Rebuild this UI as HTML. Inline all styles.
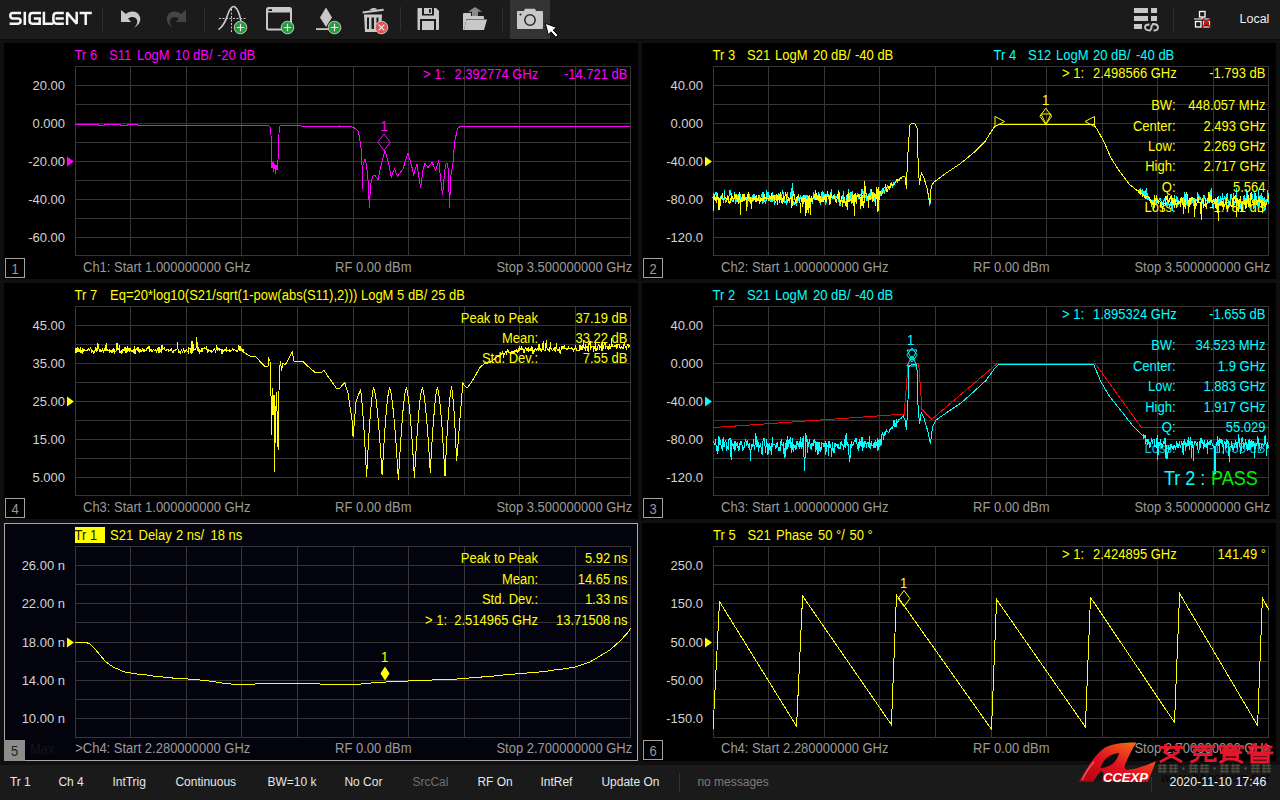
<!DOCTYPE html><html><head><meta charset="utf-8"><style>html,body{margin:0;padding:0;background:#0f0f0f;width:1280px;height:800px;overflow:hidden;position:relative}</style></head><body><svg width="1280" height="800" viewBox="0 0 1280 800" style="position:absolute;left:0;top:0;font-family:'Liberation Sans', sans-serif">
<rect x="0" y="0" width="1280" height="800" fill="#0f0f0f"/>
<rect x="0" y="0" width="1280" height="39" fill="#1b1b1b"/>
<rect x="0" y="39" width="1280" height="1" fill="#0b0b0b"/>
<path d="M21.1,13.05 H12.8 Q10.3,13.05 10.3,15.6 Q10.3,18.5 12.8,18.5 H17.9 Q20.6,18.5 20.6,21.1 Q20.6,23.65 17.9,23.65 H9.6 M24.8,11.8 V24.9 M41,13.05 H32.3 Q29.6,13.05 29.6,16.2 V20.5 Q29.6,23.65 32.3,23.65 H39.7 V18.5 H33.8 M43.9,11.8 V23.65 H53.2 M63.8,13.05 H56.6 Q53.4,13.05 53.4,16.5 V20.3 Q53.4,23.65 56.6,23.65 H63.8 M55.6,18.4 H63.8 M67.1,24.9 V12.6 L76.7,23.8 V11.8 M79.6,13.05 H91.8 M85.7,13.05 V24.9" fill="none" stroke="#f6f6f2" stroke-width="2.5" stroke-linejoin="miter" stroke-miterlimit="1.5"/>
<rect x="102.0" y="7" width="1" height="24" fill="#303030"/>
<rect x="204.0" y="7" width="1" height="24" fill="#303030"/>
<rect x="400.0" y="7" width="1" height="24" fill="#303030"/>
<rect x="502.0" y="7" width="1" height="24" fill="#303030"/>
<rect x="1173.0" y="7" width="1" height="24" fill="#303030"/>
<path d="M121,10 L121,22 L131,22 L128,18.5 C131,16 136,16.5 137,20 C138,23 136,26 134,28 C139,25 141,21 140,17 C138,11 131,10 126,14 Z" fill="#c8c8c8"/>
<path d="M186,10 L186,22 L176,22 L179,18.5 C176,16 171,16.5 170,20 C169,23 171,26 173,28 C168,25 166,21 167,17 C169,11 176,10 181,14 Z" fill="#454545"/>
<path d="M218.5,29.5 C224,26 226,20 228,14 C230,8 233,5.5 235,7 C238,9 240,16 241,21" fill="none" stroke="#c8c8c8" stroke-width="1.6"/>
<path d="M219,18.5 H246" stroke="#c8c8c8" stroke-width="1" stroke-dasharray="2,1.5"/>
<path d="M231.5,9 V32" stroke="#c8c8c8" stroke-width="1" stroke-dasharray="2,1.5"/>
<circle cx="240.5" cy="27.5" r="6.3" fill="#2b9a3c" stroke="#d0d0d0" stroke-width="0.9"/>
<path d="M236.7,27.5 H244.3 M240.5,23.7 V31.3" stroke="#e8e8e8" stroke-width="1.2"/>
<rect x="267" y="8" width="24" height="21.5" rx="1.5" fill="none" stroke="#c8c8c8" stroke-width="2"/>
<rect x="267" y="8" width="24" height="4.5" fill="#c8c8c8"/>
<rect x="268.5" y="9.2" width="3.5" height="1.8" fill="#1b1b1b"/>
<circle cx="287.5" cy="27.5" r="6.3" fill="#2b9a3c" stroke="#d0d0d0" stroke-width="0.9"/>
<path d="M283.7,27.5 H291.3 M287.5,23.7 V31.3" stroke="#e8e8e8" stroke-width="1.2"/>
<path d="M326,7.5 L332,17.5 L326,27 L320,17.5 Z" fill="#c8c8c8"/>
<rect x="316" y="28.2" width="14" height="1.8" fill="#c8c8c8"/>
<circle cx="334.5" cy="27.5" r="6.3" fill="#2b9a3c" stroke="#d0d0d0" stroke-width="0.9"/>
<path d="M330.7,27.5 H338.3 M334.5,23.7 V31.3" stroke="#e8e8e8" stroke-width="1.2"/>
<path d="M362.5,11.5 L383.5,8.8 L383.8,10.8 L362.8,13.5 Z" fill="#c8c8c8"/>
<path d="M369.5,10.5 C370,7.5 376,7 377.5,9.5 Z" fill="#c8c8c8"/>
<path d="M364,14.5 H382 L381,32 H365 Z" fill="#c8c8c8"/>
<path d="M367,17.5 H369 V29 H367 Z M371.5,17.5 H374 V29 H371.5 Z M376.5,17.5 H378.5 V29 H376.5 Z" fill="#1b1b1b"/>
<circle cx="381.5" cy="27.5" r="6.3" fill="#e05555" stroke="#d0d0d0" stroke-width="0.9"/>
<path d="M378.7,24.7 L384.3,30.3 M384.3,24.7 L378.7,30.3" stroke="#f0f0f0" stroke-width="1.1"/>
<path d="M418.5,8 H436 L439,11 V29 C439,29.6 438.6,30 438,30 H418.5 C417.9,30 417.5,29.6 417.5,29 V9 C417.5,8.4 417.9,8 418.5,8 Z" fill="#c8c8c8"/>
<path d="M422,8 H434 V15.5 H422 Z" fill="#1b1b1b"/>
<path d="M424,8 H432 V14 H424 Z" fill="#c8c8c8"/>
<rect x="429" y="9" width="1.8" height="3.8" fill="#1b1b1b"/>
<path d="M420,19 H436 V30 H420 Z" fill="#1b1b1b"/>
<path d="M422,21 H434 V30 H422 Z" fill="#c8c8c8"/>
<path d="M468,11.8 L475,7 L482,11.8 H478 V16 H472 V11.8 Z" fill="#8a8a8a"/>
<path d="M463,14 C463,13.5 463.5,13 464,13 H471 V16 H483 C483.5,16 484,16.5 484,17 V19 H466.5 L464,30 H463 Z" fill="#c8c8c8"/>
<path d="M466.5,19.5 H487 L484,30 H464 Z" fill="#c8c8c8"/>
<rect x="510" y="0" width="40" height="39" fill="#333333"/>
<path d="M518,11 H524 L525,8.8 H535 L536,11 H542 C542.6,11 543,11.4 543,12 V28 C543,28.6 542.6,29 542,29 H518 C517.4,29 517,28.6 517,28 V12 C517,11.4 517.4,11 518,11 Z" fill="#c8c8c8"/>
<circle cx="530" cy="20" r="5.2" fill="none" stroke="#2a2a2a" stroke-width="1.5"/>
<circle cx="520.5" cy="14.5" r="1.1" fill="#2a2a2a"/>
<path d="M545.3,23.3 L548.3,35 L551,31.8 L555.8,37.2 L558,35.2 L553.2,30.2 L556.5,27.5 Z" fill="#fff" stroke="#000" stroke-width="1"/>
<rect x="1134" y="8" width="14" height="5" fill="#c8c8c8"/>
<rect x="1134" y="16" width="14" height="5" fill="#c8c8c8"/>
<rect x="1134" y="24" width="8" height="5" fill="#c8c8c8"/>
<rect x="1151" y="8" width="6" height="5" fill="#c8c8c8"/>
<rect x="1151" y="16" width="6" height="5" fill="#c8c8c8"/>
<path d="M1149.5,24.5 C1146,24.5 1145,26 1145,27 C1145,29 1147,30.5 1150,30.5 L1152,27" fill="none" stroke="#c8c8c8" stroke-width="1.8"/>
<path d="M1153.5,30.5 C1157,30.5 1158,29 1158,27.5 C1158,25.5 1156,24 1153,24 L1151,27" fill="none" stroke="#c8c8c8" stroke-width="1.8"/>
<rect x="1199.5" y="11.5" width="5.5" height="5.5" fill="none" stroke="#ffffff" stroke-width="1.3"/>
<path d="M1202.2,17 V19 M1194,19 H1210" stroke="#ffffff" stroke-width="1.2"/>
<rect x="1195.5" y="21.5" width="5.5" height="5.5" fill="none" stroke="#ffffff" stroke-width="1.3"/>
<rect x="1203.5" y="21.5" width="6" height="5.5" fill="none" stroke="#dddddd" stroke-width="1.3"/>
<path d="M1202.5,18.5 L1210,27 M1210,18.5 L1202.5,27" stroke="#ff0000" stroke-width="1.6"/>
<text transform="translate(1239.5,23) scale(1,1.08)" fill="#eeeeee" font-size="12.5" text-anchor="start" xml:space="preserve" >Local</text>
<rect x="4" y="43" width="634" height="236" fill="#000"/>
<path d="M75.5,66 V256 M130.5,66 V256 M186.5,66 V256 M241.5,66 V256 M297.5,66 V256 M353.5,66 V256 M408.5,66 V256 M464.5,66 V256 M519.5,66 V256 M575.5,66 V256 M630.5,66 V256 M75,66.5 H631 M75,85.5 H631 M75,104.5 H631 M75,123.5 H631 M75,142.5 H631 M75,161.5 H631 M75,180.5 H631 M75,199.5 H631 M75,218.5 H631 M75,237.5 H631 M75,255.5 H631" stroke="#363636" stroke-width="1" fill="none" shape-rendering="crispEdges"/>
<rect x="5.5" y="258.5" width="19" height="19" fill="none" stroke="#a0a0a0" stroke-width="1"/>
<text transform="translate(15,274) scale(1,1.08)" fill="#9a9a9a" font-size="13" text-anchor="middle" xml:space="preserve" >1</text>
<text transform="translate(74.5,60) scale(1,1.08)" fill="#ff00ff" font-size="13" text-anchor="start" xml:space="preserve" >Tr 6</text>
<text transform="translate(109.0,60) scale(1,1.08)" fill="#ff00ff" font-size="13" text-anchor="start" xml:space="preserve" >S11</text>
<text transform="translate(137.0,60) scale(1,1.08)" fill="#ff00ff" font-size="13" text-anchor="start" xml:space="preserve" >LogM</text>
<text transform="translate(175.0,60) scale(1,1.08)" fill="#ff00ff" font-size="13" text-anchor="start" xml:space="preserve" >10 dB/</text>
<text transform="translate(217.0,60) scale(1,1.08)" fill="#ff00ff" font-size="13" text-anchor="start" xml:space="preserve" >-20 dB</text>
<text transform="translate(65,89.6) scale(1,1.0)" fill="#d4d4d4" font-size="13" text-anchor="end" xml:space="preserve" >20.00</text>
<text transform="translate(65,127.6) scale(1,1.0)" fill="#d4d4d4" font-size="13" text-anchor="end" xml:space="preserve" >0.000</text>
<text transform="translate(65,165.6) scale(1,1.0)" fill="#d4d4d4" font-size="13" text-anchor="end" xml:space="preserve" >-20.00</text>
<text transform="translate(65,203.6) scale(1,1.0)" fill="#d4d4d4" font-size="13" text-anchor="end" xml:space="preserve" >-40.00</text>
<text transform="translate(65,241.6) scale(1,1.0)" fill="#d4d4d4" font-size="13" text-anchor="end" xml:space="preserve" >-60.00</text>
<path d="M67,156.5 L74,161.5 L67,166.5 Z" fill="#ff00ff"/>
<text transform="translate(83,271.8) scale(1,1.08)" fill="#9a9a9a" font-size="13" text-anchor="start" xml:space="preserve" >Ch1: Start 1.000000000 GHz</text>
<text transform="translate(335,271.8) scale(1,1.08)" fill="#9a9a9a" font-size="13" text-anchor="start" xml:space="preserve" >RF 0.00 dBm</text>
<text transform="translate(632.2,271.8) scale(1,1.08)" fill="#9a9a9a" font-size="13" text-anchor="end" xml:space="preserve" >Stop 3.500000000 GHz</text>
<text transform="translate(423,78.5) scale(1,1.08)" fill="#ff00ff" font-size="13" text-anchor="start" xml:space="preserve" >&gt; 1:</text>
<text transform="translate(454.5,78.5) scale(1,1.08)" fill="#ff00ff" font-size="13" text-anchor="start" xml:space="preserve" >2.392774 GHz</text>
<text transform="translate(627.5,78.5) scale(1,1.08)" fill="#ff00ff" font-size="13" text-anchor="end" xml:space="preserve" >-14.721 dB</text>
<polyline points="75.0,124.5 98.0,124.5 99.0,125.5 104.0,125.5 105.0,124.5 120.0,124.5 121.0,125.5 127.0,125.5 128.0,124.5 137.0,124.5 138.0,125.3 259.0,125.3 261.0,126.0 263.0,125.5 268.0,125.5 270.0,126.5 271.0,135.0 271.5,163.0 272.0,168.0 273.0,162.0 273.5,172.0 274.5,164.0 275.5,174.0 276.0,165.0 277.0,170.0 278.0,160.0 278.5,141.0 279.5,126.5 281.0,125.5 300.0,125.5 302.0,126.3 330.0,126.3 340.0,126.0 350.0,126.5 354.0,127.5 358.0,131.0 359.5,137.0 361.0,148.0 362.0,165.0 362.5,188.5 363.0,165.0 365.0,159.5 366.5,165.0 368.0,180.0 369.4,207.5 370.5,185.0 372.5,176.5 375.0,175.0 378.0,180.0 380.6,167.5 385.0,150.5 388.7,163.7 391.2,177.0 394.4,168.7 397.5,176.3 403.0,168.7 408.0,153.0 412.0,167.5 413.7,174.4 417.0,164.4 420.6,188.0 423.0,170.0 425.0,163.0 428.0,168.0 432.0,162.5 435.6,170.0 438.7,160.6 442.5,195.0 445.5,164.4 447.0,163.0 448.5,170.0 449.4,207.5 451.0,175.0 453.0,163.0 453.7,152.5 455.0,140.0 457.5,128.7 460.0,126.5 463.0,126.0 560.0,126.0 561.0,127.0 562.0,126.0 630.0,126.0" fill="none" stroke="#ff00ff" stroke-width="1.0" stroke-linejoin="miter" shape-rendering="crispEdges" />
<path d="M384,133.89999999999998 L390.142,142.2 L384,150.5 L377.858,142.2 Z" fill="none" stroke="#ff00ff" stroke-width="1"/>
<text transform="translate(384,131) scale(1,1.08)" fill="#ff00ff" font-size="13" text-anchor="middle" xml:space="preserve" >1</text>
<rect x="642" y="43" width="634" height="236" fill="#000"/>
<path d="M713.5,66 V256 M768.5,66 V256 M824.5,66 V256 M879.5,66 V256 M935.5,66 V256 M991.5,66 V256 M1046.5,66 V256 M1102.5,66 V256 M1157.5,66 V256 M1213.5,66 V256 M1268.5,66 V256 M713,66.5 H1269 M713,85.5 H1269 M713,104.5 H1269 M713,123.5 H1269 M713,142.5 H1269 M713,161.5 H1269 M713,180.5 H1269 M713,199.5 H1269 M713,218.5 H1269 M713,237.5 H1269 M713,255.5 H1269" stroke="#363636" stroke-width="1" fill="none" shape-rendering="crispEdges"/>
<rect x="643.5" y="258.5" width="19" height="19" fill="none" stroke="#a0a0a0" stroke-width="1"/>
<text transform="translate(653,274) scale(1,1.08)" fill="#9a9a9a" font-size="13" text-anchor="middle" xml:space="preserve" >2</text>
<text transform="translate(712.5,60) scale(1,1.08)" fill="#ffff00" font-size="13" text-anchor="start" xml:space="preserve" >Tr 3</text>
<text transform="translate(747.0,60) scale(1,1.08)" fill="#ffff00" font-size="13" text-anchor="start" xml:space="preserve" >S21</text>
<text transform="translate(775.0,60) scale(1,1.08)" fill="#ffff00" font-size="13" text-anchor="start" xml:space="preserve" >LogM</text>
<text transform="translate(813.0,60) scale(1,1.08)" fill="#ffff00" font-size="13" text-anchor="start" xml:space="preserve" >20 dB/</text>
<text transform="translate(855.0,60) scale(1,1.08)" fill="#ffff00" font-size="13" text-anchor="start" xml:space="preserve" >-40 dB</text>
<text transform="translate(993.5,60) scale(1,1.08)" fill="#00ffff" font-size="13" text-anchor="start" xml:space="preserve" >Tr 4</text>
<text transform="translate(1028.0,60) scale(1,1.08)" fill="#00ffff" font-size="13" text-anchor="start" xml:space="preserve" >S12</text>
<text transform="translate(1056.0,60) scale(1,1.08)" fill="#00ffff" font-size="13" text-anchor="start" xml:space="preserve" >LogM</text>
<text transform="translate(1093.0,60) scale(1,1.08)" fill="#00ffff" font-size="13" text-anchor="start" xml:space="preserve" >20 dB/</text>
<text transform="translate(1136.0,60) scale(1,1.08)" fill="#00ffff" font-size="13" text-anchor="start" xml:space="preserve" >-40 dB</text>
<text transform="translate(703,89.6) scale(1,1.0)" fill="#d4d4d4" font-size="13" text-anchor="end" xml:space="preserve" >40.00</text>
<text transform="translate(703,127.6) scale(1,1.0)" fill="#d4d4d4" font-size="13" text-anchor="end" xml:space="preserve" >0.000</text>
<text transform="translate(703,165.6) scale(1,1.0)" fill="#d4d4d4" font-size="13" text-anchor="end" xml:space="preserve" >-40.00</text>
<text transform="translate(703,203.6) scale(1,1.0)" fill="#d4d4d4" font-size="13" text-anchor="end" xml:space="preserve" >-80.00</text>
<text transform="translate(703,241.6) scale(1,1.0)" fill="#d4d4d4" font-size="13" text-anchor="end" xml:space="preserve" >-120.0</text>
<path d="M705,156.5 L712,161.5 L705,166.5 Z" fill="#ffff00"/>
<text transform="translate(721,271.8) scale(1,1.08)" fill="#9a9a9a" font-size="13" text-anchor="start" xml:space="preserve" >Ch2: Start 1.000000000 GHz</text>
<text transform="translate(973,271.8) scale(1,1.08)" fill="#9a9a9a" font-size="13" text-anchor="start" xml:space="preserve" >RF 0.00 dBm</text>
<text transform="translate(1270.2,271.8) scale(1,1.08)" fill="#9a9a9a" font-size="13" text-anchor="end" xml:space="preserve" >Stop 3.500000000 GHz</text>
<text transform="translate(1175.5,212) scale(1,1.08)" fill="#ffff00" font-size="13" text-anchor="end" xml:space="preserve" >Loss:</text>
<text transform="translate(1265.5,212) scale(1,1.08)" fill="#ffff00" font-size="13" text-anchor="end" xml:space="preserve" >-1.781 dB</text>
<polyline points="713.0,197.6 713.5,192.9 714.1,197.8 714.6,197.0 715.2,193.4 715.7,192.7 716.3,192.6 716.8,199.5 717.4,198.3 717.9,199.5 718.5,199.8 719.0,200.4 719.6,202.6 720.1,197.9 720.7,197.0 721.2,195.2 721.8,195.8 722.3,199.3 722.9,198.7 723.4,202.9 724.0,198.1 724.5,189.7 725.1,201.3 725.6,203.4 726.2,199.7 726.7,200.6 727.3,196.4 727.8,195.2 728.4,196.7 728.9,197.1 729.5,192.0 730.0,189.9 730.6,192.6 731.1,195.9 731.7,200.3 732.2,200.4 732.8,201.7 733.3,200.3 733.9,201.4 734.4,192.3 735.0,194.0 735.5,204.0 736.1,199.6 736.6,200.7 737.2,196.0 737.7,195.5 738.3,201.7 738.8,193.8 739.4,202.7 739.9,195.0 740.5,194.7 741.0,199.7 741.6,199.0 742.1,196.8 742.7,200.2 743.2,197.0 743.8,197.2 744.3,197.4 744.9,199.8 745.4,197.0 746.0,197.0 746.5,200.7 747.1,206.8 747.6,199.7 748.2,197.7 748.7,198.3 749.3,201.9 749.8,194.5 750.4,201.4 750.9,203.6 751.5,197.3 752.0,200.6 752.6,202.2 753.1,193.6 753.7,199.1 754.2,193.7 754.8,199.0 755.3,202.1 755.9,197.5 756.4,201.6 757.0,197.6 757.5,199.3 758.1,200.7 758.6,200.6 759.2,195.2 759.7,202.8 760.3,201.0 760.8,198.5 761.4,194.6 761.9,195.5 762.5,203.8 763.0,191.8 763.6,203.3 764.1,199.9 764.7,199.9 765.2,202.4 765.8,203.6 766.3,196.0 766.9,190.0 767.4,197.6 768.0,192.2 768.5,201.3 769.1,198.5 769.6,201.3 770.2,198.3 770.7,202.0 771.3,196.2 771.8,201.5 772.4,191.8 772.9,202.1 773.5,197.8 774.0,198.4 774.6,204.6 775.1,198.7 775.7,197.8 776.2,194.2 776.8,194.9 777.3,198.5 777.9,201.2 778.4,193.2 779.0,196.3 779.5,195.4 780.1,195.9 780.6,194.5 781.2,199.7 781.7,196.3 782.3,191.9 782.8,190.9 783.4,195.5 783.9,194.0 784.5,203.0 785.0,200.7 785.6,201.5 786.1,203.0 786.7,205.1 787.2,192.5 787.8,195.3 788.3,200.8 788.9,200.4 789.4,201.6 790.0,199.5 790.5,192.4 791.1,197.3 791.6,201.0 792.2,182.9 792.7,204.2 793.3,204.3 793.8,202.0 794.4,203.0 794.9,204.7 795.5,199.5 796.0,199.1 796.6,205.7 797.1,202.0 797.7,201.5 798.2,195.5 798.8,199.4 799.3,198.3 799.9,200.3 800.4,196.2 801.0,197.4 801.5,201.2 802.1,196.4 802.6,198.5 803.2,199.1 803.7,199.9 804.3,195.8 804.8,195.2 805.4,195.3 805.9,201.0 806.5,195.0 807.0,203.9 807.6,195.4 808.1,203.5 808.7,200.9 809.2,204.1 809.8,201.8 810.3,198.0 810.9,201.0 811.4,200.5 812.0,201.6 812.5,202.7 813.1,197.8 813.6,193.3 814.2,194.5 814.7,199.1 815.3,198.4 815.8,199.2 816.4,198.7 816.9,194.9 817.5,196.4 818.0,197.0 818.6,191.7 819.1,200.4 819.7,198.3 820.2,204.7 820.8,200.3 821.3,197.9 821.9,192.3 822.4,192.0 823.0,198.3 823.5,192.3 824.1,194.9 824.6,198.6 825.2,199.3 825.7,203.6 826.3,202.5 826.8,194.9 827.4,195.6 827.9,193.1 828.5,197.8 829.0,197.4 829.6,200.9 830.1,199.7 830.7,197.9 831.2,189.2 831.8,193.4 832.3,199.2 832.9,197.6 833.4,197.4 834.0,198.4 834.5,194.1 835.1,199.5 835.6,197.2 836.2,196.0 836.7,196.8 837.3,198.9 837.8,196.6 838.4,202.3 838.9,190.4 839.5,200.5 840.0,206.4 840.6,201.1 841.1,201.7 841.7,200.2 842.2,194.8 842.8,199.3 843.3,191.5 843.9,198.6 844.4,200.5 845.0,200.9 845.5,204.1 846.1,202.6 846.6,195.8 847.2,195.8 847.7,200.5 848.3,195.7 848.8,188.8 849.4,201.7 849.9,197.7 850.5,200.3 851.0,191.6 851.6,203.5 852.1,192.3 852.7,191.8 853.2,197.0 853.8,196.1 854.3,197.1 854.9,194.1 855.4,196.1 856.0,195.1 856.5,202.0 857.1,195.0 857.6,194.1 858.2,197.4 858.7,198.1 859.3,193.9 859.8,196.2 860.4,194.3 860.9,194.6 861.5,197.2 862.0,189.4 862.6,192.7 863.1,192.1 863.7,197.7 864.2,198.0 864.8,199.6 865.3,195.2 865.9,194.9 866.4,197.7 867.0,201.4 867.5,199.6 868.1,195.9 868.6,194.7 869.2,194.7 869.7,197.7 870.3,188.6 870.8,196.0 871.4,195.6 871.9,199.3 872.5,192.2 873.0,192.1 873.6,194.8 874.1,201.5 874.7,195.6 875.2,195.6 875.8,194.6 876.3,194.4 876.9,191.6 877.4,194.5 878.0,196.9 878.5,196.1 879.1,190.6 879.6,198.2 880.0,191.9 880.7,195.8 881.4,192.4 882.1,190.2 882.8,188.6 883.5,190.3 884.2,193.6 884.9,191.0 885.6,188.2 886.3,190.5 887.0,188.4 887.7,184.7 888.4,188.4 889.1,187.6 889.8,189.1 890.5,185.3 891.2,182.9 891.9,185.6 892.6,188.0 893.3,182.4 894.0,185.4 894.7,182.5 895.4,182.8 896.1,181.5 896.8,179.9 897.5,181.6 898.2,179.5 898.9,179.6 899.6,179.4 900.3,177.4 901.0,178.4 901.7,177.7 902.4,176.8 903.1,176.1 903.8,176.0 904.0,175.7 905.5,178.0 906.3,188.8 907.6,157.3 908.9,140.2 909.5,125.8 911.5,123.8 914.8,123.8 917.4,128.4 918.1,162.5 919.4,184.9 921.4,173.0 924.0,178.3 927.3,188.8 929.9,206.0 931.2,186.2 933.8,182.2 944.3,174.3 960.1,163.8 974.5,152.0 985.0,141.5 994.2,127.1 999.5,124.4 1093.5,124.4 1097.0,129.0 1104.0,142.0 1111.0,158.0 1120.0,172.0 1130.0,185.0 1138.0,191.0 1138.0,190.5 1138.5,192.3 1139.1,192.1 1139.6,191.7 1140.2,188.4 1140.7,194.1 1141.3,190.3 1141.8,192.4 1142.4,190.9 1142.9,194.2 1143.5,190.9 1144.0,195.0 1144.6,197.2 1145.1,190.3 1145.7,196.7 1146.2,197.5 1146.8,187.9 1147.3,199.9 1147.9,197.5 1148.4,200.1 1149.0,197.7 1149.5,197.9 1150.1,201.4 1150.6,199.5 1151.2,205.1 1151.7,206.0 1152.3,201.1 1152.8,202.1 1153.4,201.2 1153.9,210.0 1154.5,199.1 1155.0,197.6 1155.6,203.4 1156.1,203.6 1156.7,195.5 1157.2,198.8 1157.8,199.3 1158.3,201.8 1158.9,199.9 1159.4,199.3 1160.0,198.2 1160.5,200.4 1161.1,201.1 1161.6,205.3 1162.2,204.1 1162.7,201.9 1163.3,205.5 1163.8,201.4 1164.4,198.8 1164.9,198.8 1165.5,197.0 1166.0,206.1 1166.6,201.6 1167.1,203.7 1167.7,199.7 1168.2,205.0 1168.8,202.3 1169.3,208.5 1169.9,205.0 1170.4,204.2 1171.0,202.5 1171.5,195.5 1172.1,211.2 1172.6,204.9 1173.2,199.9 1173.7,201.1 1174.3,194.6 1174.8,198.4 1175.4,200.0 1175.9,203.1 1176.5,196.9 1177.0,197.3 1177.6,206.7 1178.1,200.5 1178.7,203.9 1179.2,203.2 1179.8,202.2 1180.3,200.4 1180.9,200.2 1181.4,198.8 1182.0,203.2 1182.5,199.6 1183.1,206.2 1183.6,210.2 1184.2,191.6 1184.7,197.5 1185.3,204.8 1185.8,199.1 1186.4,204.7 1186.9,193.4 1187.5,199.7 1188.0,206.1 1188.6,204.4 1189.1,203.4 1189.7,204.0 1190.2,205.0 1190.8,204.4 1191.3,202.2 1191.9,203.4 1192.4,200.2 1193.0,201.6 1193.5,206.0 1194.1,198.4 1194.6,202.1 1195.2,198.8 1195.7,202.7 1196.3,199.3 1196.8,200.8 1197.4,201.6 1197.9,192.2 1198.5,199.9 1199.0,199.8 1199.6,196.3 1200.1,199.8 1200.7,197.9 1201.2,199.5 1201.8,200.7 1202.3,201.8 1202.9,202.1 1203.4,208.1 1204.0,195.4 1204.5,196.9 1205.1,198.9 1205.6,200.4 1206.2,200.3 1206.7,200.2 1207.3,201.4 1207.8,203.5 1208.4,200.9 1208.9,200.7 1209.5,194.4 1210.0,191.7 1210.6,202.0 1211.1,188.0 1211.7,197.6 1212.2,206.8 1212.8,200.4 1213.3,208.6 1213.9,203.8 1214.4,200.2 1215.0,201.1 1215.5,202.5 1216.1,206.9 1216.6,199.2 1217.2,201.9 1217.7,199.6 1218.3,196.5 1218.8,207.6 1219.4,202.9 1219.9,200.3 1220.5,196.0 1221.0,205.8 1221.6,198.2 1222.1,199.8 1222.7,192.6 1223.2,202.8 1223.8,198.8 1224.3,196.6 1224.9,198.2 1225.4,202.0 1226.0,197.2 1226.5,203.4 1227.1,192.9 1227.6,201.4 1228.2,199.8 1228.7,203.7 1229.3,203.0 1229.8,206.7 1230.4,204.2 1230.9,193.7 1231.5,195.5 1232.0,198.8 1232.6,198.4 1233.1,197.5 1233.7,192.9 1234.2,204.7 1234.8,202.5 1235.3,200.8 1235.9,201.6 1236.4,188.0 1237.0,198.6 1237.5,203.2 1238.1,206.6 1238.6,202.4 1239.2,199.3 1239.7,209.3 1240.3,204.0 1240.8,209.0 1241.4,201.8 1241.9,201.3 1242.5,201.3 1243.0,202.6 1243.6,201.5 1244.1,195.5 1244.7,201.0 1245.2,206.4 1245.8,198.5 1246.3,201.1 1246.9,189.4 1247.4,201.3 1248.0,204.4 1248.5,201.4 1249.1,198.0 1249.6,202.1 1250.2,210.0 1250.7,196.0 1251.3,192.2 1251.8,199.0 1252.4,194.2 1252.9,198.5 1253.5,200.1 1254.0,209.1 1254.6,190.7 1255.1,207.1 1255.7,200.4 1256.2,199.5 1256.8,196.3 1257.3,206.3 1257.9,203.6 1258.4,190.0 1259.0,207.3 1259.5,200.7 1260.1,195.2 1260.6,195.7 1261.2,204.0 1261.7,193.3 1262.3,205.3 1262.8,195.8 1263.4,201.4 1263.9,204.7 1264.5,197.2 1265.0,210.6 1265.6,200.8 1266.1,200.8 1266.7,202.0 1267.2,197.9 1267.8,189.8 1268.3,198.2 1268.9,203.5" fill="none" stroke="#00ffff" stroke-width="1.0" stroke-linejoin="miter" shape-rendering="crispEdges" />
<polyline points="713.0,211.3 713.5,198.7 714.1,195.4 714.6,198.6 715.2,201.1 715.7,197.5 716.3,196.9 716.8,202.5 717.4,193.4 717.9,196.4 718.5,201.2 719.0,210.4 719.6,197.9 720.1,205.8 720.7,200.3 721.2,196.8 721.8,198.7 722.3,192.8 722.9,197.6 723.4,200.3 724.0,198.4 724.5,196.4 725.1,196.9 725.6,197.7 726.2,198.7 726.7,200.7 727.3,199.6 727.8,196.9 728.4,196.6 728.9,202.2 729.5,201.9 730.0,203.5 730.6,198.1 731.1,200.0 731.7,193.2 732.2,197.5 732.8,197.3 733.3,201.9 733.9,199.2 734.4,193.7 735.0,198.5 735.5,195.7 736.1,196.4 736.6,194.5 737.2,200.4 737.7,199.2 738.3,203.9 738.8,196.4 739.4,192.2 739.9,195.7 740.5,215.3 741.0,201.4 741.6,198.5 742.1,202.1 742.7,194.2 743.2,201.3 743.8,195.2 744.3,193.6 744.9,199.4 745.4,198.3 746.0,200.1 746.5,210.7 747.1,196.6 747.6,194.4 748.2,193.6 748.7,200.7 749.3,197.8 749.8,198.6 750.4,196.8 750.9,201.1 751.5,208.5 752.0,200.2 752.6,198.3 753.1,200.9 753.7,196.1 754.2,198.1 754.8,198.9 755.3,200.2 755.9,196.0 756.4,195.6 757.0,201.6 757.5,197.8 758.1,200.0 758.6,195.0 759.2,203.0 759.7,203.1 760.3,198.1 760.8,201.8 761.4,198.6 761.9,198.7 762.5,198.6 763.0,201.4 763.6,195.3 764.1,194.7 764.7,199.2 765.2,197.6 765.8,198.9 766.3,196.7 766.9,199.0 767.4,198.5 768.0,198.5 768.5,200.1 769.1,199.0 769.6,195.4 770.2,199.0 770.7,196.5 771.3,199.5 771.8,193.5 772.4,199.7 772.9,196.6 773.5,198.3 774.0,194.9 774.6,198.3 775.1,201.0 775.7,202.1 776.2,199.9 776.8,194.3 777.3,205.2 777.9,195.3 778.4,200.3 779.0,195.7 779.5,202.8 780.1,192.1 780.6,195.2 781.2,202.5 781.7,198.0 782.3,203.8 782.8,199.6 783.4,200.6 783.9,196.0 784.5,198.8 785.0,196.2 785.6,192.5 786.1,196.4 786.7,195.2 787.2,200.8 787.8,203.4 788.3,197.7 788.9,197.3 789.4,201.1 790.0,198.7 790.5,197.6 791.1,197.5 791.6,207.6 792.2,205.6 792.7,200.3 793.3,191.3 793.8,194.8 794.4,194.7 794.9,199.7 795.5,203.4 796.0,202.6 796.6,202.8 797.1,195.9 797.7,199.5 798.2,194.2 798.8,195.9 799.3,199.9 799.9,199.5 800.4,213.2 801.0,202.7 801.5,198.0 802.1,198.7 802.6,207.3 803.2,194.9 803.7,202.4 804.3,201.4 804.8,198.8 805.4,196.2 805.9,215.9 806.5,199.1 807.0,198.9 807.6,199.5 808.1,212.5 808.7,197.5 809.2,194.8 809.8,202.4 810.3,215.0 810.9,198.2 811.4,196.5 812.0,201.5 812.5,199.7 813.1,197.7 813.6,196.8 814.2,195.6 814.7,194.7 815.3,200.3 815.8,190.5 816.4,198.2 816.9,199.7 817.5,199.9 818.0,195.8 818.6,200.8 819.1,194.5 819.7,201.0 820.2,196.4 820.8,203.4 821.3,199.4 821.9,202.1 822.4,199.3 823.0,197.9 823.5,201.5 824.1,195.2 824.6,200.3 825.2,193.7 825.7,202.2 826.3,200.7 826.8,198.5 827.4,190.6 827.9,196.8 828.5,195.1 829.0,198.5 829.6,205.1 830.1,193.0 830.7,204.1 831.2,194.2 831.8,196.6 832.3,197.3 832.9,197.5 833.4,195.4 834.0,198.2 834.5,197.4 835.1,199.6 835.6,201.0 836.2,202.3 836.7,199.4 837.3,198.6 837.8,194.1 838.4,198.9 838.9,191.1 839.5,202.2 840.0,200.4 840.6,202.7 841.1,201.1 841.7,195.8 842.2,202.7 842.8,206.7 843.3,197.8 843.9,203.4 844.4,197.1 845.0,203.2 845.5,205.9 846.1,200.9 846.6,198.9 847.2,210.0 847.7,196.8 848.3,192.3 848.8,202.4 849.4,196.4 849.9,201.5 850.5,200.0 851.0,198.8 851.6,199.7 852.1,202.8 852.7,193.8 853.2,196.2 853.8,198.5 854.3,216.1 854.9,194.1 855.4,193.5 856.0,202.1 856.5,202.8 857.1,194.8 857.6,195.9 858.2,194.7 858.7,197.4 859.3,195.2 859.8,197.9 860.4,197.5 860.9,208.9 861.5,192.8 862.0,195.2 862.6,198.3 863.1,207.7 863.7,201.3 864.2,202.5 864.8,180.7 865.3,192.8 865.9,193.1 866.4,194.8 867.0,195.9 867.5,199.3 868.1,195.6 868.6,207.6 869.2,197.1 869.7,195.9 870.3,199.0 870.8,198.1 871.4,189.6 871.9,190.9 872.5,199.8 873.0,201.5 873.6,194.7 874.1,193.7 874.7,196.0 875.2,195.4 875.8,205.5 876.3,191.3 876.9,187.4 877.4,192.6 878.0,212.4 878.5,187.2 879.1,191.8 879.6,199.9 880.0,193.3 880.7,191.9 881.4,195.5 882.1,193.9 882.8,191.1 883.5,190.9 884.2,187.4 884.9,187.6 885.6,185.4 886.3,188.0 887.0,191.5 887.7,190.0 888.4,186.8 889.1,185.9 889.8,187.5 890.5,186.9 891.2,183.5 891.9,184.4 892.6,185.1 893.3,184.5 894.0,184.2 894.7,183.8 895.4,182.4 896.1,180.9 896.8,179.2 897.5,179.6 898.2,180.8 898.9,180.9 899.6,179.7 900.3,178.1 901.0,176.7 901.7,177.9 902.4,176.3 903.1,176.3 903.8,176.5 904.0,175.7 905.5,178.0 906.3,188.8 907.6,157.3 908.9,140.2 909.5,125.8 911.5,123.8 914.8,123.8 917.4,128.4 918.1,162.5 919.4,184.9 921.4,173.0 924.0,178.3 927.3,188.8 929.9,203.2 931.2,186.2 933.8,182.2 944.3,174.3 960.1,163.8 974.5,152.0 985.0,141.5 994.2,127.1 999.5,124.4 1093.5,124.4 1097.0,129.0 1104.0,142.0 1111.0,158.0 1120.0,172.0 1130.0,185.0 1138.0,191.0 1138.0,190.5 1138.5,191.4 1139.1,192.7 1139.6,193.0 1140.2,190.0 1140.7,194.4 1141.3,193.9 1141.8,193.7 1142.4,195.7 1142.9,193.8 1143.5,194.7 1144.0,196.3 1144.6,195.8 1145.1,198.7 1145.7,195.2 1146.2,197.2 1146.8,196.8 1147.3,196.7 1147.9,196.1 1148.4,196.9 1149.0,197.3 1149.5,201.3 1150.1,198.7 1150.6,202.8 1151.2,203.1 1151.7,200.2 1152.3,204.7 1152.8,202.7 1153.4,202.8 1153.9,209.5 1154.5,194.8 1155.0,199.4 1155.6,200.0 1156.1,199.4 1156.7,196.4 1157.2,199.9 1157.8,201.6 1158.3,204.3 1158.9,201.0 1159.4,201.2 1160.0,201.9 1160.5,206.5 1161.1,204.8 1161.6,201.2 1162.2,208.7 1162.7,210.5 1163.3,204.2 1163.8,203.7 1164.4,203.3 1164.9,203.5 1165.5,204.4 1166.0,195.8 1166.6,196.4 1167.1,201.0 1167.7,195.1 1168.2,202.8 1168.8,202.2 1169.3,201.2 1169.9,197.6 1170.4,199.1 1171.0,195.6 1171.5,204.9 1172.1,198.4 1172.6,204.4 1173.2,200.5 1173.7,205.2 1174.3,198.5 1174.8,207.7 1175.4,199.2 1175.9,202.4 1176.5,208.1 1177.0,204.5 1177.6,199.8 1178.1,204.0 1178.7,200.8 1179.2,202.7 1179.8,201.6 1180.3,207.4 1180.9,198.3 1181.4,196.8 1182.0,201.0 1182.5,198.2 1183.1,205.6 1183.6,213.5 1184.2,198.7 1184.7,204.3 1185.3,208.8 1185.8,194.6 1186.4,192.3 1186.9,192.3 1187.5,202.5 1188.0,199.3 1188.6,213.2 1189.1,206.2 1189.7,197.8 1190.2,204.6 1190.8,198.9 1191.3,196.9 1191.9,201.2 1192.4,197.9 1193.0,197.6 1193.5,200.7 1194.1,200.6 1194.6,217.3 1195.2,199.0 1195.7,208.6 1196.3,203.0 1196.8,205.8 1197.4,198.6 1197.9,197.7 1198.5,199.8 1199.0,202.6 1199.6,202.9 1200.1,202.6 1200.7,203.9 1201.2,220.3 1201.8,202.0 1202.3,200.7 1202.9,197.9 1203.4,208.3 1204.0,206.4 1204.5,204.9 1205.1,205.5 1205.6,198.2 1206.2,207.2 1206.7,208.4 1207.3,198.3 1207.8,202.8 1208.4,198.5 1208.9,192.0 1209.5,201.8 1210.0,201.0 1210.6,198.8 1211.1,194.6 1211.7,202.2 1212.2,199.9 1212.8,203.4 1213.3,199.7 1213.9,200.8 1214.4,203.8 1215.0,203.2 1215.5,198.3 1216.1,209.4 1216.6,199.7 1217.2,198.4 1217.7,204.1 1218.3,221.1 1218.8,204.1 1219.4,203.5 1219.9,204.6 1220.5,204.1 1221.0,200.8 1221.6,202.1 1222.1,205.7 1222.7,200.9 1223.2,209.8 1223.8,201.6 1224.3,206.8 1224.9,204.9 1225.4,204.8 1226.0,202.0 1226.5,197.7 1227.1,211.6 1227.6,204.9 1228.2,208.3 1228.7,205.4 1229.3,204.7 1229.8,201.1 1230.4,202.9 1230.9,205.8 1231.5,205.9 1232.0,207.2 1232.6,197.9 1233.1,208.0 1233.7,199.0 1234.2,196.3 1234.8,198.2 1235.3,196.4 1235.9,198.2 1236.4,216.8 1237.0,198.2 1237.5,202.6 1238.1,201.8 1238.6,211.7 1239.2,199.4 1239.7,206.7 1240.3,195.9 1240.8,198.9 1241.4,210.8 1241.9,204.9 1242.5,210.7 1243.0,201.7 1243.6,203.4 1244.1,203.6 1244.7,205.2 1245.2,197.8 1245.8,209.4 1246.3,205.4 1246.9,200.1 1247.4,201.0 1248.0,194.2 1248.5,207.2 1249.1,203.5 1249.6,203.3 1250.2,207.3 1250.7,194.7 1251.3,191.6 1251.8,198.5 1252.4,201.5 1252.9,202.9 1253.5,202.5 1254.0,204.7 1254.6,200.1 1255.1,199.0 1255.7,192.9 1256.2,204.6 1256.8,203.1 1257.3,200.1 1257.9,203.5 1258.4,197.0 1259.0,198.9 1259.5,196.9 1260.1,202.4 1260.6,199.8 1261.2,201.9 1261.7,202.8 1262.3,212.9 1262.8,199.5 1263.4,205.4 1263.9,202.0 1264.5,201.8 1265.0,206.9 1265.6,204.6 1266.1,205.0 1266.7,204.4 1267.2,201.0 1267.8,201.4 1268.3,195.2 1268.9,194.9" fill="none" stroke="#ffff00" stroke-width="1.0" stroke-linejoin="miter" shape-rendering="crispEdges" />
<text transform="translate(1062,77.5) scale(1,1.08)" fill="#ffff00" font-size="13" text-anchor="start" xml:space="preserve" >&gt; 1:</text>
<text transform="translate(1093,77.5) scale(1,1.08)" fill="#ffff00" font-size="13" text-anchor="start" xml:space="preserve" >2.498566 GHz</text>
<text transform="translate(1265.5,77.5) scale(1,1.08)" fill="#ffff00" font-size="13" text-anchor="end" xml:space="preserve" >-1.793 dB</text>
<text transform="translate(1175.5,110) scale(1,1.08)" fill="#ffff00" font-size="13" text-anchor="end" xml:space="preserve" >BW:</text>
<text transform="translate(1265.5,110) scale(1,1.08)" fill="#ffff00" font-size="13" text-anchor="end" xml:space="preserve" >448.057 MHz</text>
<text transform="translate(1175.5,130.5) scale(1,1.08)" fill="#ffff00" font-size="13" text-anchor="end" xml:space="preserve" >Center:</text>
<text transform="translate(1265.5,130.5) scale(1,1.08)" fill="#ffff00" font-size="13" text-anchor="end" xml:space="preserve" >2.493 GHz</text>
<text transform="translate(1175.5,151) scale(1,1.08)" fill="#ffff00" font-size="13" text-anchor="end" xml:space="preserve" >Low:</text>
<text transform="translate(1265.5,151) scale(1,1.08)" fill="#ffff00" font-size="13" text-anchor="end" xml:space="preserve" >2.269 GHz</text>
<text transform="translate(1175.5,171) scale(1,1.08)" fill="#ffff00" font-size="13" text-anchor="end" xml:space="preserve" >High:</text>
<text transform="translate(1265.5,171) scale(1,1.08)" fill="#ffff00" font-size="13" text-anchor="end" xml:space="preserve" >2.717 GHz</text>
<text transform="translate(1175.5,191.5) scale(1,1.08)" fill="#ffff00" font-size="13" text-anchor="end" xml:space="preserve" >Q:</text>
<text transform="translate(1265.5,191.5) scale(1,1.08)" fill="#ffff00" font-size="13" text-anchor="end" xml:space="preserve" >5.564</text>
<path d="M995,116.5 L1004.5,121.5 L995,126.5 Z" fill="none" stroke="#ffff00" stroke-width="1"/>
<path d="M1094.5,116.5 L1085,121.5 L1094.5,126.5 Z" fill="none" stroke="#ffff00" stroke-width="1"/>
<path d="M1045.8,108.3 L1051.72,116.3 L1045.8,124.3 L1039.8799999999999,116.3 Z" fill="none" stroke="#ffff00" stroke-width="1"/>
<path d="M1041,114 L1051,114 L1046,124 Z" fill="none" stroke="#ffff00" stroke-width="1"/>
<text transform="translate(1045.5,104.5) scale(1,1.08)" fill="#ffff00" font-size="13" text-anchor="middle" xml:space="preserve" >1</text>
<rect x="4" y="283" width="634" height="236" fill="#000"/>
<path d="M75.5,306 V496 M130.5,306 V496 M186.5,306 V496 M241.5,306 V496 M297.5,306 V496 M353.5,306 V496 M408.5,306 V496 M464.5,306 V496 M519.5,306 V496 M575.5,306 V496 M630.5,306 V496 M75,306.5 H631 M75,325.5 H631 M75,344.5 H631 M75,363.5 H631 M75,382.5 H631 M75,401.5 H631 M75,420.5 H631 M75,439.5 H631 M75,458.5 H631 M75,477.5 H631 M75,495.5 H631" stroke="#363636" stroke-width="1" fill="none" shape-rendering="crispEdges"/>
<rect x="5.5" y="498.5" width="19" height="19" fill="none" stroke="#a0a0a0" stroke-width="1"/>
<text transform="translate(15,514) scale(1,1.08)" fill="#9a9a9a" font-size="13" text-anchor="middle" xml:space="preserve" >4</text>
<text transform="translate(74.5,300) scale(1,1.08)" fill="#ffff00" font-size="13" text-anchor="start" xml:space="preserve" >Tr 7</text>
<text transform="translate(110,300) scale(1,1.08)" fill="#ffff00" font-size="13" text-anchor="start" xml:space="preserve" textLength="355" lengthAdjust="spacing">Eq=20*log10(S21/sqrt(1-pow(abs(S11),2))) LogM 5 dB/ 25 dB</text>
<text transform="translate(65,329.6) scale(1,1.0)" fill="#d4d4d4" font-size="13" text-anchor="end" xml:space="preserve" >45.00</text>
<text transform="translate(65,367.6) scale(1,1.0)" fill="#d4d4d4" font-size="13" text-anchor="end" xml:space="preserve" >35.00</text>
<text transform="translate(65,405.6) scale(1,1.0)" fill="#d4d4d4" font-size="13" text-anchor="end" xml:space="preserve" >25.00</text>
<text transform="translate(65,443.6) scale(1,1.0)" fill="#d4d4d4" font-size="13" text-anchor="end" xml:space="preserve" >15.00</text>
<text transform="translate(65,481.6) scale(1,1.0)" fill="#d4d4d4" font-size="13" text-anchor="end" xml:space="preserve" >5.000</text>
<path d="M67,396.5 L74,401.5 L67,406.5 Z" fill="#ffff00"/>
<text transform="translate(83,511.8) scale(1,1.08)" fill="#9a9a9a" font-size="13" text-anchor="start" xml:space="preserve" >Ch3: Start 1.000000000 GHz</text>
<text transform="translate(335,511.8) scale(1,1.08)" fill="#9a9a9a" font-size="13" text-anchor="start" xml:space="preserve" >RF 0.00 dBm</text>
<text transform="translate(632.2,511.8) scale(1,1.08)" fill="#9a9a9a" font-size="13" text-anchor="end" xml:space="preserve" >Stop 3.500000000 GHz</text>
<text transform="translate(538,322.7) scale(1,1.08)" fill="#ffff00" font-size="13" text-anchor="end" xml:space="preserve" >Peak to Peak</text>
<text transform="translate(627.5,322.7) scale(1,1.08)" fill="#ffff00" font-size="13" text-anchor="end" xml:space="preserve" >37.19 dB</text>
<text transform="translate(538,343.4) scale(1,1.08)" fill="#ffff00" font-size="13" text-anchor="end" xml:space="preserve" >Mean:</text>
<text transform="translate(627.5,343.4) scale(1,1.08)" fill="#ffff00" font-size="13" text-anchor="end" xml:space="preserve" >33.22 dB</text>
<text transform="translate(538,363.3) scale(1,1.08)" fill="#ffff00" font-size="13" text-anchor="end" xml:space="preserve" >Std. Dev.:</text>
<text transform="translate(627.5,363.3) scale(1,1.08)" fill="#ffff00" font-size="13" text-anchor="end" xml:space="preserve" >7.55 dB</text>
<polyline points="75.0,348.0 75.6,351.2 76.2,349.4 76.8,352.6 77.4,347.5 78.0,351.8 78.6,348.2 79.2,351.1 79.8,349.2 80.4,348.4 81.0,353.4 81.6,349.6 82.2,353.7 82.8,348.3 83.4,351.2 84.0,349.5 84.6,349.6 85.2,350.9 85.8,350.7 86.4,350.5 87.0,350.4 87.6,350.9 88.2,348.9 88.8,348.8 89.4,350.3 90.0,349.0 90.6,347.9 91.2,350.0 91.8,352.2 92.4,350.7 93.0,351.1 93.6,353.9 94.2,349.9 94.8,352.7 95.4,347.7 96.0,348.5 96.6,352.3 97.2,350.0 97.8,342.7 98.4,346.1 99.0,349.0 99.6,352.0 100.2,348.7 100.8,352.3 101.4,350.5 102.0,351.2 102.6,348.5 103.2,350.6 103.8,352.0 104.4,349.0 105.0,350.8 105.6,348.1 106.2,343.3 106.8,350.3 107.4,349.7 108.0,351.1 108.6,350.6 109.2,350.1 109.8,352.0 110.4,350.8 111.0,351.8 111.6,352.2 112.2,349.1 112.8,353.3 113.4,348.9 114.0,349.0 114.6,352.8 115.2,351.6 115.8,351.6 116.4,350.4 117.0,342.8 117.6,349.6 118.2,349.9 118.8,349.4 119.4,345.4 120.0,352.7 120.6,352.3 121.2,349.9 121.8,352.9 122.4,351.9 123.0,349.1 123.6,350.8 124.2,350.4 124.8,347.2 125.4,347.1 126.0,353.2 126.6,349.6 127.2,350.6 127.8,346.1 128.4,351.2 129.0,348.4 129.6,351.8 130.2,347.8 130.8,350.3 131.4,350.8 132.0,351.4 132.6,350.8 133.2,350.2 133.8,352.4 134.4,346.5 135.0,354.1 135.6,349.5 136.2,349.0 136.8,348.8 137.4,351.4 138.0,347.4 138.6,349.6 139.2,353.1 139.8,349.5 140.4,349.4 141.0,351.8 141.6,351.0 142.2,349.0 142.8,350.7 143.4,351.5 144.0,348.8 144.6,351.0 145.2,350.8 145.8,351.0 146.4,350.2 147.0,348.5 147.6,347.7 148.2,346.4 148.8,348.2 149.4,346.6 150.0,351.5 150.6,348.7 151.2,351.6 151.8,349.6 152.4,351.1 153.0,349.9 153.6,349.7 154.2,350.0 154.8,350.1 155.4,350.0 156.0,351.2 156.6,352.1 157.2,348.9 157.8,349.3 158.4,352.9 159.0,346.8 159.6,352.7 160.2,351.1 160.8,349.5 161.4,353.1 162.0,345.1 162.6,349.1 163.2,348.7 163.8,349.0 164.4,348.3 165.0,349.7 165.6,350.4 166.2,349.3 166.8,350.7 167.4,349.1 168.0,349.3 168.6,350.9 169.2,350.6 169.8,350.7 170.4,350.7 171.0,349.0 171.6,348.5 172.2,352.3 172.8,351.2 173.4,351.9 174.0,349.9 174.6,350.2 175.2,350.8 175.8,349.3 176.4,349.5 177.0,349.4 177.6,341.8 178.2,352.6 178.8,351.4 179.4,352.4 180.0,351.3 180.6,352.6 181.2,349.7 181.8,350.4 182.4,352.2 183.0,350.6 183.6,348.2 184.2,350.9 184.8,352.5 185.4,351.4 186.0,349.6 186.6,350.2 187.2,351.9 187.8,351.8 188.4,352.6 189.0,347.6 189.6,348.9 190.2,348.7 190.8,352.6 191.4,353.9 192.0,341.2 192.6,353.3 193.2,344.5 193.8,350.2 194.4,349.9 195.0,349.8 195.6,349.7 196.2,347.2 196.8,336.8 197.4,351.1 198.0,346.9 198.6,351.6 199.2,352.7 199.8,349.7 200.4,350.5 201.0,351.8 201.6,349.8 202.2,352.4 202.8,348.8 203.4,348.8 204.0,348.8 204.6,348.0 205.2,348.3 205.8,348.8 206.4,346.3 207.0,349.4 207.6,351.3 208.2,349.3 208.8,351.5 209.4,350.7 210.0,350.5 210.6,350.4 211.2,352.7 211.8,350.8 212.4,351.3 213.0,350.9 213.6,350.2 214.2,349.3 214.8,348.9 215.4,353.1 216.0,350.5 216.6,346.2 217.2,347.7 217.8,350.4 218.4,348.9 219.0,348.3 219.6,350.1 220.2,349.1 220.8,349.0 221.4,350.2 222.0,354.0 222.6,348.7 223.2,350.2 223.8,352.3 224.4,349.6 225.0,351.0 225.6,349.4 226.2,348.3 226.8,351.1 227.4,350.8 228.0,350.1 228.6,350.8 229.2,349.8 229.8,351.7 230.4,351.4 231.0,349.8 231.6,350.7 232.2,349.9 232.8,348.9 233.4,350.6 234.0,349.6 234.6,349.3 235.2,350.3 235.8,350.3 236.4,350.7 237.0,351.4 237.6,350.9 238.2,350.0 238.8,344.7 239.4,348.1 240.0,351.1 240.6,346.5 241.2,351.0 241.8,348.6 242.4,351.8 243.0,348.9 243.6,351.9 244.0,352.5 250.0,356.0 256.0,357.0 261.3,362.8 265.0,366.6 268.0,366.0 268.4,357.2 270.0,361.0 270.3,375.0 271.0,395.6 271.6,435.0 272.1,388.0 273.0,415.0 274.0,395.0 274.4,471.6 275.5,420.0 276.5,392.0 278.1,450.0 278.5,420.0 279.4,369.4 280.6,361.0 281.5,371.0 283.0,363.0 285.0,365.0 287.5,361.0 292.2,351.6 294.0,361.0 297.8,361.9 303.4,361.9 307.2,365.6 314.7,372.2 322.0,372.0 324.0,370.0 327.0,375.0 336.3,388.1 340.0,388.0 344.7,382.5 348.0,393.0 352.0,420.0 353.1,436.9 356.0,402.0 360.4,389.5 361.1,394.0 361.8,400.3 362.5,407.9 363.1,416.8 363.8,426.9 364.5,437.9 365.2,450.0 365.9,463.1 366.6,477.0 367.3,463.2 368.0,450.3 368.7,438.3 369.4,427.4 370.1,417.4 370.9,408.6 371.6,401.1 372.3,394.9 373.0,390.3 373.7,388.1 374.5,390.3 375.4,394.7 376.2,400.8 377.1,408.2 377.9,416.9 378.7,426.6 379.6,437.4 380.4,449.1 381.3,461.8 382.1,475.3 382.9,461.8 383.6,449.1 384.4,437.4 385.1,426.6 385.9,416.9 386.6,408.2 387.4,400.8 388.1,394.7 388.9,390.3 389.6,388.1 390.5,390.4 391.4,395.1 392.2,401.5 393.1,409.3 394.0,418.4 394.9,428.7 395.8,440.0 396.6,452.4 397.5,465.7 398.4,480.0 399.2,465.7 400.0,452.4 400.8,440.0 401.6,428.7 402.4,418.4 403.1,409.3 403.9,401.5 404.7,395.1 405.5,390.4 406.3,388.1 407.1,390.4 407.9,394.9 408.7,401.2 409.5,408.9 410.4,417.8 411.2,427.8 412.0,438.9 412.8,451.0 413.6,464.1 414.4,478.0 415.2,464.1 416.0,451.0 416.8,438.9 417.6,427.8 418.4,417.8 419.1,408.9 419.9,401.2 420.7,394.9 421.5,390.4 422.3,388.1 423.1,390.2 423.9,394.5 424.7,400.4 425.5,407.6 426.3,415.9 427.1,425.4 427.9,435.8 428.7,447.2 429.5,459.4 430.3,472.5 431.0,459.4 431.7,447.2 432.4,435.8 433.1,425.4 433.9,415.9 434.6,407.6 435.3,400.4 436.0,394.5 436.7,390.2 437.4,388.1 438.2,390.3 438.9,394.8 439.7,400.9 440.4,408.5 441.2,417.2 442.0,427.1 442.7,437.9 443.5,449.8 444.2,462.6 445.0,476.3 445.6,462.6 446.3,449.8 446.9,437.9 447.6,427.1 448.2,417.2 448.9,408.5 449.6,400.9 450.2,394.8 450.9,390.3 451.5,388.1 452.0,389.9 452.5,393.7 453.0,398.8 453.5,405.0 454.1,412.2 454.6,420.4 455.1,429.5 455.6,439.3 456.1,449.9 456.6,461.3 462.8,383.4 466.9,388.1 471.0,383.0 480.0,367.5 484.0,364.0 489.4,362.8 500.6,354.4 500.0,357.2 500.6,353.9 501.2,353.9 501.8,354.6 502.4,351.9 503.0,353.4 503.6,355.8 504.2,353.8 504.8,354.2 505.4,351.6 506.0,351.1 506.6,353.5 507.2,351.3 507.8,350.0 508.4,350.3 509.0,353.2 509.6,352.6 510.2,352.2 510.8,354.1 511.4,352.4 512.0,353.8 512.6,352.0 513.2,354.1 513.8,350.8 514.4,353.0 515.0,350.3 515.6,351.8 516.2,351.8 516.8,348.8 517.4,351.8 518.0,350.9 518.6,351.2 519.2,346.1 519.8,350.0 520.4,348.9 521.0,349.5 521.6,347.5 522.2,348.5 522.8,349.9 523.4,349.8 524.0,353.2 524.6,350.9 525.2,348.0 525.8,347.0 526.4,349.8 527.0,351.2 527.6,349.5 528.2,350.7 528.8,348.1 529.4,349.7 530.0,351.1 530.6,348.4 531.2,350.8 531.8,345.8 532.4,349.7 533.0,353.6 533.6,351.1 534.2,349.5 534.8,351.0 535.4,348.9 536.0,349.4 536.6,350.3 537.2,348.9 537.8,349.4 538.4,350.0 539.0,344.1 539.6,349.4 540.2,350.2 540.8,348.8 541.4,351.5 542.0,348.8 542.6,349.5 543.2,340.6 543.8,349.8 544.4,350.3 545.0,349.9 545.6,350.1 546.2,339.8 546.8,346.8 547.4,349.1 548.0,348.9 548.6,349.4 549.2,352.1 549.8,349.1 550.4,341.8 551.0,348.3 551.6,348.1 552.2,350.7 552.8,350.8 553.4,348.6 554.0,348.3 554.6,347.5 555.2,351.9 555.8,349.5 556.4,343.5 557.0,349.1 557.6,350.1 558.2,350.8 558.8,349.5 559.4,348.4 560.0,352.4 560.6,353.0 561.2,349.3 561.8,346.5 562.4,347.7 563.0,345.9 563.6,347.4 564.2,345.9 564.8,348.2 565.4,348.6 566.0,348.1 566.6,349.2 567.2,348.6 567.8,349.3 568.4,347.2 569.0,348.8 569.6,348.5 570.2,348.0 570.8,349.0 571.4,348.1 572.0,347.6 572.6,348.9 573.2,349.6 573.8,351.5 574.4,348.4 575.0,349.1 575.6,344.7 576.2,349.1 576.8,350.6 577.4,350.6 578.0,349.8 578.6,350.8 579.2,350.8 579.8,344.7 580.4,349.7 581.0,345.5 581.6,349.5 582.2,345.5 582.8,350.2 583.4,340.4 584.0,347.5 584.6,348.2 585.2,349.2 585.8,344.3 586.4,348.2 587.0,345.7 587.6,349.8 588.2,350.9 588.8,343.0 589.4,345.3 590.0,341.1 590.6,348.7 591.2,347.9 591.8,346.3 592.4,346.7 593.0,345.8 593.6,350.4 594.2,348.9 594.8,348.4 595.4,340.8 596.0,350.7 596.6,348.5 597.2,349.2 597.8,347.2 598.4,344.8 599.0,345.3 599.6,349.5 600.2,347.0 600.8,348.0 601.4,342.6 602.0,351.1 602.6,343.3 603.2,348.8 603.8,345.9 604.4,343.3 605.0,343.4 605.6,348.8 606.2,346.2 606.8,346.1 607.4,349.0 608.0,346.2 608.6,350.3 609.2,348.4 609.8,344.5 610.4,348.1 611.0,347.2 611.6,338.1 612.2,346.1 612.8,346.6 613.4,346.8 614.0,346.2 614.6,346.0 615.2,345.3 615.8,346.5 616.4,347.8 617.0,344.5 617.6,346.3 618.2,344.4 618.8,344.1 619.4,345.4 620.0,348.2 620.6,348.4 621.2,346.7 621.8,347.4 622.4,348.4 623.0,347.3 623.6,348.1 624.2,342.3 624.8,345.4 625.4,347.7 626.0,347.7 626.6,350.2 627.2,344.7 627.8,344.3 628.4,346.6 629.0,344.6 629.6,346.5" fill="none" stroke="#ffff00" stroke-width="1.0" stroke-linejoin="miter" shape-rendering="crispEdges" />
<rect x="642" y="283" width="634" height="236" fill="#000"/>
<path d="M713.5,306 V496 M768.5,306 V496 M824.5,306 V496 M879.5,306 V496 M935.5,306 V496 M991.5,306 V496 M1046.5,306 V496 M1102.5,306 V496 M1157.5,306 V496 M1213.5,306 V496 M1268.5,306 V496 M713,306.5 H1269 M713,325.5 H1269 M713,344.5 H1269 M713,363.5 H1269 M713,382.5 H1269 M713,401.5 H1269 M713,420.5 H1269 M713,439.5 H1269 M713,458.5 H1269 M713,477.5 H1269 M713,495.5 H1269" stroke="#363636" stroke-width="1" fill="none" shape-rendering="crispEdges"/>
<rect x="643.5" y="498.5" width="19" height="19" fill="none" stroke="#a0a0a0" stroke-width="1"/>
<text transform="translate(653,514) scale(1,1.08)" fill="#9a9a9a" font-size="13" text-anchor="middle" xml:space="preserve" >3</text>
<text transform="translate(712.5,300) scale(1,1.08)" fill="#00ffff" font-size="13" text-anchor="start" xml:space="preserve" >Tr 2</text>
<text transform="translate(747.0,300) scale(1,1.08)" fill="#00ffff" font-size="13" text-anchor="start" xml:space="preserve" >S21</text>
<text transform="translate(775.0,300) scale(1,1.08)" fill="#00ffff" font-size="13" text-anchor="start" xml:space="preserve" >LogM</text>
<text transform="translate(813.0,300) scale(1,1.08)" fill="#00ffff" font-size="13" text-anchor="start" xml:space="preserve" >20 dB/</text>
<text transform="translate(855.0,300) scale(1,1.08)" fill="#00ffff" font-size="13" text-anchor="start" xml:space="preserve" >-40 dB</text>
<text transform="translate(703,329.6) scale(1,1.0)" fill="#d4d4d4" font-size="13" text-anchor="end" xml:space="preserve" >40.00</text>
<text transform="translate(703,367.6) scale(1,1.0)" fill="#d4d4d4" font-size="13" text-anchor="end" xml:space="preserve" >0.000</text>
<text transform="translate(703,405.6) scale(1,1.0)" fill="#d4d4d4" font-size="13" text-anchor="end" xml:space="preserve" >-40.00</text>
<text transform="translate(703,443.6) scale(1,1.0)" fill="#d4d4d4" font-size="13" text-anchor="end" xml:space="preserve" >-80.00</text>
<text transform="translate(703,481.6) scale(1,1.0)" fill="#d4d4d4" font-size="13" text-anchor="end" xml:space="preserve" >-120.0</text>
<path d="M705,396.5 L712,401.5 L705,406.5 Z" fill="#00ffff"/>
<text transform="translate(721,511.8) scale(1,1.08)" fill="#9a9a9a" font-size="13" text-anchor="start" xml:space="preserve" >Ch3: Start 1.000000000 GHz</text>
<text transform="translate(973,511.8) scale(1,1.08)" fill="#9a9a9a" font-size="13" text-anchor="start" xml:space="preserve" >RF 0.00 dBm</text>
<text transform="translate(1270.2,511.8) scale(1,1.08)" fill="#9a9a9a" font-size="13" text-anchor="end" xml:space="preserve" >Stop 3.500000000 GHz</text>
<text transform="translate(1175.5,452.5) scale(1,1.08)" fill="#10b8d8" font-size="13" text-anchor="end" xml:space="preserve" >Loss:</text>
<text transform="translate(1265.5,452.5) scale(1,1.08)" fill="#10b8d8" font-size="13" text-anchor="end" xml:space="preserve" >-1.655 dB</text>
<polyline points="713.0,427.6 904.1,414.1 905.7,395.0 908.2,363.3 918.7,363.3 922.0,409.6 931.7,419.3 997.5,363.3 1095.0,363.3 1141.5,427.6 1269.0,427.6" fill="none" stroke="#ff0000" stroke-width="1.0" stroke-linejoin="miter" shape-rendering="crispEdges" />
<polyline points="713.0,441.1 713.5,441.1 714.1,443.5 714.6,444.1 715.2,443.0 715.7,438.8 716.3,450.8 716.8,448.1 717.4,445.9 717.9,454.4 718.5,438.2 719.0,436.6 719.6,444.6 720.1,440.4 720.7,442.0 721.2,447.0 721.8,446.9 722.3,450.7 722.9,440.2 723.4,437.2 724.0,447.4 724.5,445.5 725.1,441.7 725.6,439.9 726.2,443.0 726.7,450.9 727.3,447.1 727.8,448.4 728.4,450.2 728.9,439.4 729.5,439.6 730.0,438.0 730.6,442.6 731.1,460.3 731.7,439.9 732.2,444.3 732.8,445.6 733.3,445.1 733.9,449.2 734.4,441.3 735.0,450.8 735.5,440.6 736.1,446.0 736.6,445.6 737.2,441.7 737.7,448.1 738.3,445.8 738.8,450.7 739.4,447.6 739.9,442.8 740.5,444.6 741.0,440.9 741.6,442.1 742.1,445.1 742.7,451.2 743.2,447.1 743.8,449.8 744.3,444.3 744.9,443.0 745.4,440.2 746.0,441.6 746.5,445.7 747.1,440.2 747.6,443.6 748.2,444.9 748.7,446.7 749.3,449.9 749.8,443.0 750.4,461.3 750.9,451.2 751.5,444.6 752.0,443.7 752.6,447.4 753.1,444.5 753.7,439.3 754.2,450.1 754.8,445.4 755.3,445.0 755.9,433.2 756.4,446.0 757.0,447.0 757.5,440.0 758.1,442.3 758.6,451.8 759.2,445.0 759.7,447.8 760.3,443.5 760.8,446.6 761.4,447.3 761.9,453.3 762.5,454.4 763.0,441.1 763.6,438.7 764.1,438.7 764.7,444.7 765.2,446.6 765.8,452.9 766.3,439.4 766.9,445.3 767.4,442.7 768.0,454.9 768.5,444.7 769.1,444.3 769.6,449.2 770.2,449.0 770.7,446.3 771.3,454.6 771.8,445.6 772.4,437.5 772.9,445.6 773.5,444.4 774.0,445.1 774.6,444.3 775.1,445.0 775.7,449.3 776.2,446.5 776.8,443.9 777.3,442.3 777.9,446.5 778.4,450.0 779.0,449.0 779.5,447.9 780.1,451.0 780.6,444.1 781.2,439.0 781.7,443.9 782.3,445.1 782.8,444.6 783.4,443.6 783.9,453.6 784.5,448.4 785.0,457.7 785.6,442.7 786.1,450.3 786.7,446.3 787.2,436.2 787.8,448.8 788.3,444.8 788.9,440.1 789.4,443.5 790.0,439.2 790.5,437.6 791.1,449.9 791.6,453.0 792.2,437.6 792.7,447.7 793.3,451.8 793.8,443.9 794.4,447.0 794.9,447.2 795.5,446.2 796.0,449.6 796.6,441.5 797.1,444.0 797.7,441.1 798.2,446.6 798.8,444.3 799.3,441.1 799.9,449.4 800.4,437.5 801.0,442.0 801.5,448.7 802.1,446.1 802.6,443.5 803.2,435.8 803.7,442.0 804.3,470.8 804.8,467.3 805.4,441.7 805.9,433.4 806.5,441.9 807.0,438.9 807.6,452.5 808.1,444.7 808.7,446.7 809.2,439.6 809.8,441.2 810.3,447.8 810.9,448.7 811.4,449.4 812.0,443.0 812.5,444.7 813.1,445.5 813.6,442.6 814.2,439.4 814.7,442.1 815.3,441.7 815.8,451.8 816.4,445.7 816.9,442.8 817.5,442.8 818.0,454.7 818.6,443.6 819.1,442.0 819.7,450.3 820.2,450.7 820.8,448.1 821.3,448.8 821.9,442.3 822.4,443.7 823.0,443.2 823.5,447.4 824.1,444.9 824.6,446.4 825.2,441.4 825.7,454.8 826.3,449.1 826.8,444.7 827.4,445.5 827.9,445.0 828.5,455.8 829.0,441.4 829.6,447.1 830.1,446.3 830.7,445.1 831.2,450.3 831.8,456.6 832.3,442.5 832.9,449.7 833.4,447.6 834.0,453.2 834.5,444.9 835.1,442.8 835.6,445.4 836.2,444.2 836.7,444.5 837.3,448.0 837.8,444.6 838.4,444.4 838.9,448.2 839.5,448.0 840.0,449.1 840.6,446.2 841.1,441.3 841.7,444.7 842.2,444.6 842.8,445.0 843.3,446.1 843.9,449.6 844.4,439.2 845.0,444.4 845.5,448.1 846.1,432.8 846.6,444.6 847.2,445.2 847.7,441.9 848.3,445.4 848.8,453.1 849.4,457.6 849.9,461.6 850.5,443.8 851.0,448.0 851.6,440.9 852.1,445.2 852.7,445.6 853.2,444.9 853.8,443.2 854.3,440.6 854.9,442.0 855.4,440.2 856.0,437.9 856.5,442.0 857.1,444.5 857.6,444.4 858.2,451.1 858.7,442.5 859.3,447.8 859.8,438.7 860.4,446.0 860.9,445.8 861.5,446.4 862.0,436.7 862.6,450.8 863.1,447.5 863.7,443.0 864.2,441.4 864.8,446.5 865.3,441.1 865.9,441.1 866.4,448.1 867.0,444.2 867.5,442.6 868.1,442.2 868.6,444.4 869.2,447.8 869.7,436.3 870.3,449.0 870.8,443.7 871.4,440.6 871.9,445.8 872.5,445.8 873.0,445.9 873.6,444.4 874.1,448.2 874.7,446.2 875.2,440.5 875.8,448.4 876.3,443.3 876.9,444.1 877.4,437.7 878.0,450.7 878.5,440.8 879.1,440.0 879.6,446.0 880.0,446.3 880.7,439.0 881.4,445.4 882.1,432.2 882.8,433.1 883.5,439.5 884.2,432.6 884.9,435.1 885.6,434.7 886.3,428.8 887.0,431.7 887.7,431.9 888.4,432.3 889.1,432.1 889.8,429.9 890.5,429.0 891.2,428.2 891.9,427.8 892.6,428.5 893.3,424.8 894.0,420.4 894.7,425.5 895.4,424.1 896.1,426.8 896.8,421.1 897.5,422.5 898.2,421.9 898.9,419.5 899.6,419.5 900.3,418.1 901.0,418.6 901.7,417.4 902.4,416.9 903.3,416.1 905.0,420.0 906.5,429.9 908.0,400.0 909.0,366.5 912.0,364.0 916.0,364.0 917.5,373.0 917.9,403.0 919.5,424.2 921.2,412.8 924.0,418.0 928.0,432.0 930.4,443.7 932.5,427.5 935.8,420.1 951.2,409.6 961.0,403.0 975.6,390.0 986.1,380.3 995.0,368.0 999.1,364.1 1093.5,364.1 1101.0,382.0 1110.0,397.0 1122.0,412.0 1132.5,425.5 1143.0,436.0 1143.0,439.3 1143.5,435.0 1144.1,435.2 1144.6,436.9 1145.2,436.0 1145.7,443.9 1146.3,439.8 1146.8,441.1 1147.4,439.4 1147.9,445.4 1148.5,438.9 1149.0,441.5 1149.6,447.7 1150.1,445.9 1150.7,446.6 1151.2,439.9 1151.8,438.5 1152.3,443.5 1152.9,440.3 1153.4,439.6 1154.0,439.1 1154.5,444.6 1155.1,447.1 1155.6,445.5 1156.2,446.3 1156.7,442.0 1157.3,434.6 1157.8,460.1 1158.4,447.0 1158.9,441.8 1159.5,443.8 1160.0,445.7 1160.6,439.4 1161.1,443.8 1161.7,447.5 1162.2,447.4 1162.8,445.6 1163.3,442.7 1163.9,441.7 1164.4,442.5 1165.0,437.7 1165.5,452.0 1166.1,459.1 1166.6,445.5 1167.2,454.4 1167.7,458.9 1168.3,445.1 1168.8,449.8 1169.4,446.6 1169.9,449.6 1170.5,445.2 1171.0,443.7 1171.6,447.9 1172.1,446.4 1172.7,448.0 1173.2,447.0 1173.8,449.7 1174.3,446.0 1174.9,445.1 1175.4,450.2 1176.0,447.5 1176.5,441.6 1177.1,443.0 1177.6,448.1 1178.2,445.7 1178.7,447.9 1179.3,440.8 1179.8,443.9 1180.4,448.3 1180.9,446.0 1181.5,441.4 1182.0,442.7 1182.6,446.1 1183.1,454.9 1183.7,444.4 1184.2,438.8 1184.8,440.6 1185.3,450.5 1185.9,441.6 1186.4,446.7 1187.0,446.1 1187.5,445.7 1188.1,438.8 1188.6,438.0 1189.2,450.0 1189.7,440.7 1190.3,444.2 1190.8,437.0 1191.4,458.3 1191.9,440.7 1192.5,443.2 1193.0,448.1 1193.6,460.8 1194.1,441.6 1194.7,443.3 1195.2,443.0 1195.8,440.7 1196.3,445.0 1196.9,445.8 1197.4,442.1 1198.0,449.8 1198.5,451.6 1199.1,449.7 1199.6,446.6 1200.2,438.4 1200.7,448.0 1201.3,438.6 1201.8,438.0 1202.4,443.7 1202.9,440.7 1203.5,448.0 1204.0,447.1 1204.6,440.1 1205.1,444.4 1205.7,444.9 1206.2,447.5 1206.8,443.3 1207.3,453.8 1207.9,441.8 1208.4,442.5 1209.0,444.7 1209.5,444.9 1210.1,440.5 1210.6,444.9 1211.2,441.5 1211.7,440.6 1212.3,445.5 1212.8,445.0 1213.4,447.1 1213.9,445.8 1214.5,448.4 1215.0,475.0 1215.6,451.5 1216.1,444.7 1216.7,441.7 1217.2,444.5 1217.8,436.4 1218.3,444.2 1218.9,444.8 1219.4,451.7 1220.0,438.5 1220.5,442.0 1221.1,443.2 1221.6,439.4 1222.2,446.4 1222.7,440.0 1223.3,454.0 1223.8,444.1 1224.4,444.0 1224.9,441.2 1225.5,446.3 1226.0,448.6 1226.6,438.8 1227.1,440.9 1227.7,443.3 1228.2,441.1 1228.8,452.6 1229.3,461.8 1229.9,446.9 1230.4,446.6 1231.0,447.3 1231.5,440.7 1232.1,449.6 1232.6,446.1 1233.2,447.3 1233.7,450.6 1234.3,445.2 1234.8,447.1 1235.4,439.9 1235.9,444.5 1236.5,448.0 1237.0,442.5 1237.6,449.3 1238.1,441.0 1238.7,434.5 1239.2,440.8 1239.8,445.6 1240.3,448.4 1240.9,454.4 1241.4,439.0 1242.0,438.1 1242.5,437.8 1243.1,442.6 1243.6,448.6 1244.2,446.0 1244.7,443.3 1245.3,445.3 1245.8,439.1 1246.4,448.5 1246.9,442.4 1247.5,450.1 1248.0,449.6 1248.6,447.9 1249.1,438.7 1249.7,450.1 1250.2,448.9 1250.8,441.7 1251.3,440.0 1251.9,447.4 1252.4,441.4 1253.0,446.7 1253.5,441.0 1254.1,443.3 1254.6,458.2 1255.2,444.5 1255.7,445.2 1256.3,444.2 1256.8,445.3 1257.4,442.4 1257.9,435.8 1258.5,445.5 1259.0,443.2 1259.6,446.2 1260.1,449.9 1260.7,450.4 1261.2,448.3 1261.8,444.4 1262.3,444.6 1262.9,444.6 1263.4,445.7 1264.0,445.5 1264.5,439.3 1265.1,435.1 1265.6,440.5 1266.2,445.5 1266.7,456.2 1267.3,442.0 1267.8,444.9 1268.4,446.0 1268.9,448.4" fill="none" stroke="#00ffff" stroke-width="1.0" stroke-linejoin="miter" shape-rendering="crispEdges" />
<text transform="translate(1062,318.5) scale(1,1.08)" fill="#00ffff" font-size="13" text-anchor="start" xml:space="preserve" >&gt; 1:</text>
<text transform="translate(1093,318.5) scale(1,1.08)" fill="#00ffff" font-size="13" text-anchor="start" xml:space="preserve" >1.895324 GHz</text>
<text transform="translate(1265.5,318.5) scale(1,1.08)" fill="#00ffff" font-size="13" text-anchor="end" xml:space="preserve" >-1.655 dB</text>
<text transform="translate(1175.5,350) scale(1,1.08)" fill="#00ffff" font-size="13" text-anchor="end" xml:space="preserve" >BW:</text>
<text transform="translate(1265.5,350) scale(1,1.08)" fill="#00ffff" font-size="13" text-anchor="end" xml:space="preserve" >34.523 MHz</text>
<text transform="translate(1175.5,370.5) scale(1,1.08)" fill="#00ffff" font-size="13" text-anchor="end" xml:space="preserve" >Center:</text>
<text transform="translate(1265.5,370.5) scale(1,1.08)" fill="#00ffff" font-size="13" text-anchor="end" xml:space="preserve" >1.9 GHz</text>
<text transform="translate(1175.5,391) scale(1,1.08)" fill="#00ffff" font-size="13" text-anchor="end" xml:space="preserve" >Low:</text>
<text transform="translate(1265.5,391) scale(1,1.08)" fill="#00ffff" font-size="13" text-anchor="end" xml:space="preserve" >1.883 GHz</text>
<text transform="translate(1175.5,411.5) scale(1,1.08)" fill="#00ffff" font-size="13" text-anchor="end" xml:space="preserve" >High:</text>
<text transform="translate(1265.5,411.5) scale(1,1.08)" fill="#00ffff" font-size="13" text-anchor="end" xml:space="preserve" >1.917 GHz</text>
<text transform="translate(1175.5,432) scale(1,1.08)" fill="#00ffff" font-size="13" text-anchor="end" xml:space="preserve" >Q:</text>
<text transform="translate(1265.5,432) scale(1,1.08)" fill="#00ffff" font-size="13" text-anchor="end" xml:space="preserve" >55.029</text>
<path d="M912,348 L917.18,355 L912,362 L906.82,355 Z" fill="none" stroke="#00ffff" stroke-width="1"/>
<path d="M907,350 L917,350 L912,360 Z M907,366 L917,366 L912,356 Z" fill="none" stroke="#00ffff" stroke-width="1"/>
<text transform="translate(910.5,344.8) scale(1,1.08)" fill="#00ffff" font-size="13" text-anchor="middle" xml:space="preserve" >1</text>
<text transform="translate(1164,484.5) scale(1,1.08)" fill="#00ffff" font-size="18" text-anchor="start" xml:space="preserve" >Tr 2 :</text>
<text transform="translate(1211,484.5) scale(1,1.08)" fill="#00ee00" font-size="18" text-anchor="start" xml:space="preserve" >PASS</text>
<rect x="4.5" y="523.5" width="633" height="237" fill="#03030d" stroke="#a8a8a8" stroke-width="1"/>
<path d="M75.5,546 V738 M130.5,546 V738 M186.5,546 V738 M241.5,546 V738 M297.5,546 V738 M353.5,546 V738 M408.5,546 V738 M464.5,546 V738 M519.5,546 V738 M575.5,546 V738 M630.5,546 V738 M75,546.5 H631 M75,565.5 H631 M75,584.5 H631 M75,603.5 H631 M75,622.5 H631 M75,642.5 H631 M75,661.5 H631 M75,680.5 H631 M75,699.5 H631 M75,718.5 H631 M75,737.5 H631" stroke="#363636" stroke-width="1" fill="none" shape-rendering="crispEdges"/>
<rect x="4" y="740" width="21" height="21" fill="#8c8c8c"/>
<text transform="translate(14.5,756) scale(1,1.08)" fill="#222" font-size="13" text-anchor="middle" xml:space="preserve" >5</text>
<rect x="75" y="527" width="30" height="16" fill="#ffff00"/>
<text transform="translate(74.5,540) scale(1,1.08)" fill="#222200" font-size="13" text-anchor="start" xml:space="preserve" >Tr 1</text>
<text transform="translate(110,540) scale(1,1.08)" fill="#ffff00" font-size="13" text-anchor="start" xml:space="preserve" >S21</text>
<text transform="translate(138.5,540) scale(1,1.08)" fill="#ffff00" font-size="13" text-anchor="start" xml:space="preserve" >Delay</text>
<text transform="translate(176,540) scale(1,1.08)" fill="#ffff00" font-size="13" text-anchor="start" xml:space="preserve" >2 ns/</text>
<text transform="translate(210.5,540) scale(1,1.08)" fill="#ffff00" font-size="13" text-anchor="start" xml:space="preserve" >18 ns</text>
<text transform="translate(65,569.6) scale(1,1.0)" fill="#d4d4d4" font-size="13" text-anchor="end" xml:space="preserve" >26.00 n</text>
<text transform="translate(65,607.6) scale(1,1.0)" fill="#d4d4d4" font-size="13" text-anchor="end" xml:space="preserve" >22.00 n</text>
<text transform="translate(65,646.6) scale(1,1.0)" fill="#d4d4d4" font-size="13" text-anchor="end" xml:space="preserve" >18.00 n</text>
<text transform="translate(65,684.6) scale(1,1.0)" fill="#d4d4d4" font-size="13" text-anchor="end" xml:space="preserve" >14.00 n</text>
<text transform="translate(65,722.6) scale(1,1.0)" fill="#d4d4d4" font-size="13" text-anchor="end" xml:space="preserve" >10.00 n</text>
<path d="M67,637.5 L74,642.5 L67,647.5 Z" fill="#ffff00"/>
<text transform="translate(75.2,752.8) scale(1,1.08)" fill="#9a9a9a" font-size="13" text-anchor="start" xml:space="preserve" >&gt;Ch4: Start 2.280000000 GHz</text>
<text transform="translate(335,752.8) scale(1,1.08)" fill="#9a9a9a" font-size="13" text-anchor="start" xml:space="preserve" >RF 0.00 dBm</text>
<text transform="translate(632.2,752.8) scale(1,1.08)" fill="#9a9a9a" font-size="13" text-anchor="end" xml:space="preserve" >Stop 2.700000000 GHz</text>
<text transform="translate(30,754) scale(1,1.08)" fill="#151515" font-size="13" text-anchor="start" xml:space="preserve" >Max</text>
<text transform="translate(538,563) scale(1,1.08)" fill="#ffff00" font-size="13" text-anchor="end" xml:space="preserve" >Peak to Peak</text>
<text transform="translate(627.5,563) scale(1,1.08)" fill="#ffff00" font-size="13" text-anchor="end" xml:space="preserve" >5.92 ns</text>
<text transform="translate(538,584) scale(1,1.08)" fill="#ffff00" font-size="13" text-anchor="end" xml:space="preserve" >Mean:</text>
<text transform="translate(627.5,584) scale(1,1.08)" fill="#ffff00" font-size="13" text-anchor="end" xml:space="preserve" >14.65 ns</text>
<text transform="translate(538,604) scale(1,1.08)" fill="#ffff00" font-size="13" text-anchor="end" xml:space="preserve" >Std. Dev.:</text>
<text transform="translate(627.5,604) scale(1,1.08)" fill="#ffff00" font-size="13" text-anchor="end" xml:space="preserve" >1.33 ns</text>
<text transform="translate(538,625) scale(1,1.08)" fill="#ffff00" font-size="13" text-anchor="end" xml:space="preserve" >&gt; 1:  2.514965 GHz</text>
<text transform="translate(627.5,625) scale(1,1.08)" fill="#ffff00" font-size="13" text-anchor="end" xml:space="preserve" >13.71508 ns</text>
<polyline points="75.0,642.0 78.3,642.0 81.7,642.0 85.0,642.0 90.0,644.0 95.0,649.0 100.0,655.0 105.0,661.0 110.0,665.0 115.0,668.0 118.3,669.0 121.7,671.0 125.0,672.0 128.0,672.0 131.0,673.0 134.0,673.0 137.0,674.0 140.0,674.0 143.3,674.0 146.7,675.0 150.0,675.0 153.3,676.0 156.7,676.0 160.0,676.0 163.1,677.0 166.2,677.0 169.4,677.0 172.5,678.0 175.6,678.0 178.8,678.0 181.9,678.0 185.0,678.0 188.0,679.0 191.0,679.0 194.0,679.0 197.0,679.0 200.0,680.0 203.1,680.0 206.2,680.0 209.4,681.0 212.5,681.0 215.6,682.0 218.8,682.0 221.9,683.0 225.0,683.0 228.0,683.0 231.0,684.0 234.0,684.0 237.0,684.0 240.0,684.0 243.0,684.0 246.0,684.0 249.0,684.0 252.0,684.0 255.0,684.0 258.0,683.0 261.0,683.0 264.0,683.0 267.0,683.0 270.0,683.0 273.1,683.0 276.2,683.0 279.4,683.0 282.5,683.0 285.6,683.0 288.8,683.0 291.9,683.0 295.0,683.0 298.1,683.0 301.2,683.0 304.4,683.0 307.5,683.0 310.6,683.0 313.8,683.0 316.9,683.0 320.0,684.0 323.2,684.0 326.4,684.0 329.6,684.0 332.8,684.0 336.0,684.0 339.2,684.0 342.4,684.0 345.6,684.0 348.8,684.0 352.0,684.0 355.1,684.0 358.2,684.0 361.4,684.0 364.5,683.0 367.6,683.0 370.8,683.0 373.9,682.0 377.0,682.0 380.1,682.0 383.1,682.0 386.2,682.0 389.3,681.0 392.4,681.0 395.4,681.0 398.5,681.0 401.6,681.0 404.6,681.0 407.7,681.0 410.8,680.0 413.9,680.0 416.9,680.0 420.0,680.0 423.1,680.0 426.2,680.0 429.2,680.0 432.3,680.0 435.4,679.0 438.5,679.0 441.5,679.0 444.6,679.0 447.7,679.0 450.8,679.0 453.8,679.0 456.9,679.0 460.0,678.0 463.1,678.0 466.2,678.0 469.2,678.0 472.3,677.0 475.4,677.0 478.5,677.0 481.5,677.0 484.6,676.0 487.7,676.0 490.8,676.0 493.8,676.0 496.9,675.0 500.0,675.0 503.0,675.0 506.0,674.0 509.0,674.0 512.0,674.0 515.0,674.0 518.0,673.0 521.0,673.0 524.0,673.0 527.0,673.0 530.0,672.0 533.0,672.0 536.0,672.0 539.0,672.0 542.0,671.0 545.0,671.0 548.0,671.0 551.0,670.0 554.0,670.0 557.0,669.0 560.0,669.0 563.0,669.0 566.0,668.0 569.0,668.0 572.0,667.0 575.0,667.0 578.0,666.0 581.0,665.0 584.0,664.0 587.0,663.0 590.0,662.0 593.3,660.0 596.7,658.0 600.0,656.0 603.3,654.0 606.7,652.0 610.0,650.0 613.3,647.0 616.7,644.0 620.0,641.0 623.7,637.0 627.3,633.0 631.0,628.0" fill="none" stroke="#ffff00" stroke-width="1.0" stroke-linejoin="miter" shape-rendering="crispEdges" />
<path d="M385,666.5 L389.5,673.5 L385,680.5 L380.5,673.5 Z" fill="#ffff00"/>
<text transform="translate(384.5,662) scale(1,1.08)" fill="#ffff00" font-size="13" text-anchor="middle" xml:space="preserve" >1</text>
<rect x="642" y="523" width="634" height="238" fill="#000"/>
<path d="M713.5,546 V738 M768.5,546 V738 M824.5,546 V738 M879.5,546 V738 M935.5,546 V738 M991.5,546 V738 M1046.5,546 V738 M1102.5,546 V738 M1157.5,546 V738 M1213.5,546 V738 M1268.5,546 V738 M713,546.5 H1269 M713,565.5 H1269 M713,584.5 H1269 M713,603.5 H1269 M713,622.5 H1269 M713,642.5 H1269 M713,661.5 H1269 M713,680.5 H1269 M713,699.5 H1269 M713,718.5 H1269 M713,737.5 H1269" stroke="#363636" stroke-width="1" fill="none" shape-rendering="crispEdges"/>
<rect x="643.5" y="740.5" width="19" height="19" fill="none" stroke="#a0a0a0" stroke-width="1"/>
<text transform="translate(653,756) scale(1,1.08)" fill="#9a9a9a" font-size="13" text-anchor="middle" xml:space="preserve" >6</text>
<text transform="translate(713,540) scale(1,1.08)" fill="#ffff00" font-size="13" text-anchor="start" xml:space="preserve" >Tr 5</text>
<text transform="translate(747.5,540) scale(1,1.08)" fill="#ffff00" font-size="13" text-anchor="start" xml:space="preserve" >S21</text>
<text transform="translate(776,540) scale(1,1.08)" fill="#ffff00" font-size="13" text-anchor="start" xml:space="preserve" >Phase</text>
<text transform="translate(818,540) scale(1,1.08)" fill="#ffff00" font-size="13" text-anchor="start" xml:space="preserve" >50 °/</text>
<text transform="translate(849.5,540) scale(1,1.08)" fill="#ffff00" font-size="13" text-anchor="start" xml:space="preserve" >50 °</text>
<text transform="translate(703,569.6) scale(1,1.0)" fill="#d4d4d4" font-size="13" text-anchor="end" xml:space="preserve" >250.0</text>
<text transform="translate(703,607.6) scale(1,1.0)" fill="#d4d4d4" font-size="13" text-anchor="end" xml:space="preserve" >150.0</text>
<text transform="translate(703,646.6) scale(1,1.0)" fill="#d4d4d4" font-size="13" text-anchor="end" xml:space="preserve" >50.00</text>
<text transform="translate(703,684.6) scale(1,1.0)" fill="#d4d4d4" font-size="13" text-anchor="end" xml:space="preserve" >-50.00</text>
<text transform="translate(703,722.6) scale(1,1.0)" fill="#d4d4d4" font-size="13" text-anchor="end" xml:space="preserve" >-150.0</text>
<path d="M705,637.5 L712,642.5 L705,647.5 Z" fill="#ffff00"/>
<text transform="translate(721,752.8) scale(1,1.08)" fill="#9a9a9a" font-size="13" text-anchor="start" xml:space="preserve" >Ch4: Start 2.280000000 GHz</text>
<text transform="translate(973,752.8) scale(1,1.08)" fill="#9a9a9a" font-size="13" text-anchor="start" xml:space="preserve" >RF 0.00 dBm</text>
<text transform="translate(1270.2,752.8) scale(1,1.08)" fill="#9a9a9a" font-size="13" text-anchor="end" xml:space="preserve" >Stop 2.700000000 GHz</text>
<text transform="translate(1062,558.5) scale(1,1.08)" fill="#ffff00" font-size="13" text-anchor="start" xml:space="preserve" >&gt; 1:</text>
<text transform="translate(1093,558.5) scale(1,1.08)" fill="#ffff00" font-size="13" text-anchor="start" xml:space="preserve" >2.424895 GHz</text>
<text transform="translate(1266,558.5) scale(1,1.08)" fill="#ffff00" font-size="13" text-anchor="end" xml:space="preserve" >141.49 °</text>
<polyline points="713.0,729.4 719.5,601.6 796.6,726.4 802.6,596.0 891.4,724.6 896.5,595.0 991.5,729.4 996.6,599.5 1085.4,727.0 1090.5,597.4 1174.5,722.5 1179.6,593.5 1257.6,725.5 1262.4,598.0 1269.0,610.0" fill="none" stroke="#ffff00" stroke-width="1.0" stroke-linejoin="miter" shape-rendering="crispEdges" />
<path d="M904,590.5 L909.92,598.5 L904,606.5 L898.08,598.5 Z" fill="none" stroke="#ffff00" stroke-width="1"/>
<text transform="translate(903.5,588) scale(1,1.08)" fill="#ffff00" font-size="13" text-anchor="middle" xml:space="preserve" >1</text>
<rect x="0" y="765" width="1280" height="35" fill="#1a1a1a"/>
<text transform="translate(9.9,786) scale(1,1.06)" fill="#e6e6e6" font-size="12" text-anchor="start" xml:space="preserve" >Tr 1</text>
<text transform="translate(58.4,786) scale(1,1.06)" fill="#e6e6e6" font-size="12" text-anchor="start" xml:space="preserve" >Ch 4</text>
<text transform="translate(112.4,786) scale(1,1.06)" fill="#e6e6e6" font-size="12" text-anchor="start" xml:space="preserve" >IntTrig</text>
<text transform="translate(175.4,786) scale(1,1.06)" fill="#e6e6e6" font-size="12" text-anchor="start" xml:space="preserve" >Continuous</text>
<text transform="translate(267.4,786) scale(1,1.06)" fill="#e6e6e6" font-size="12" text-anchor="start" xml:space="preserve" >BW=10 k</text>
<text transform="translate(344.4,786) scale(1,1.06)" fill="#e6e6e6" font-size="12" text-anchor="start" xml:space="preserve" >No Cor</text>
<text transform="translate(412.4,786) scale(1,1.06)" fill="#6e6e6e" font-size="12" text-anchor="start" xml:space="preserve" >SrcCal</text>
<text transform="translate(477.4,786) scale(1,1.06)" fill="#e6e6e6" font-size="12" text-anchor="start" xml:space="preserve" >RF On</text>
<text transform="translate(540.4,786) scale(1,1.06)" fill="#e6e6e6" font-size="12" text-anchor="start" xml:space="preserve" >IntRef</text>
<text transform="translate(601.4,786) scale(1,1.06)" fill="#e6e6e6" font-size="12" text-anchor="start" xml:space="preserve" >Update On</text>
<text transform="translate(697.4,786) scale(1,1.06)" fill="#7a7a7a" font-size="12" text-anchor="start" xml:space="preserve" >no messages</text>
<rect x="679" y="773" width="1" height="19" fill="#333"/>
<rect x="1151" y="777" width="1" height="15" fill="#333"/>
<defs><linearGradient id="lg" x1="0" y1="1" x2="1" y2="0"><stop offset="0" stop-color="#b00010"/><stop offset="0.45" stop-color="#e01020"/><stop offset="0.75" stop-color="#f05018"/><stop offset="1" stop-color="#f8a020"/></linearGradient></defs>
<path d="M1078.7,781.8 C1087,768 1095,754 1105,747.5 C1113,743.2 1123,742.6 1136.3,742.4 C1132,750 1127.5,758 1124.8,765.5 C1124,769 1126,770.2 1130,769.6 C1140,768 1150,764 1155.9,761 C1153,770 1150,776 1147.8,781.8 Z" fill="url(#lg)"/>
<path d="M1100.3,768.2 C1103,760 1109,753.8 1119.3,753 C1117,760.5 1112,767.2 1100.3,768.2 Z" fill="#0a0a0a"/>
<path d="M1092.9,781.8 L1100.3,771.3 L1103.6,772.4 L1102.2,781.8 Z" fill="#141414"/>
<path d="M1082,780 C1086,772 1090,766 1094,762" stroke="#f0a080" stroke-width="1.5" fill="none" opacity="0.6"/>
<text x="1103" y="781.5" fill="#ffffff" font-size="12" font-weight="bold" font-style="italic" textLength="45" lengthAdjust="spacingAndGlyphs">CCEXP</text>
<path d="M1159,747.5 H1183 M1165.5,744 V751 M1176.5,744 V751 M1163.5,751.5 L1182,762 M1179.5,751.5 L1160,762 M1190,746.5 H1215.5 M1202.7,743.5 V749 M1194.5,750 H1211 V754.5 H1194.5 Z M1198.5,755 C1198.5,759 1196,761 1190.5,762 M1206,755 V760.7 H1215.3 V757.5 M1230.7,743.2 V745.8 M1219.3,749.2 V746.3 H1242.8 V749.2 M1222,749.6 H1240 M1220,752.6 H1242 M1226,747.5 V754 M1235,747.5 V754 M1224,755 H1237.5 V759 H1224 Z M1226,759.5 L1219.5,762.5 M1235,759.5 L1243,762.5 M1253,743.5 L1255,746 M1267,743.5 L1265,746 M1248,747.2 H1272.5 M1255.7,747 V752.5 M1264.5,747 V752.5 M1250,749 L1252,751.5 M1270,749 L1268,751.5 M1247,752.8 H1273.5 M1251.8,755 H1268.3 V762 H1251.8 Z M1251.8,758.4 H1268.3" stroke="#e5172c" stroke-width="2.8" fill="none" stroke-linecap="butt"/>
<path d="M1158,765.5 H1167 M1158,768.5 H1167 M1158,771.5 H1167 M1160,764 V773 M1164.5,764 V773 M1169,765.5 H1178 M1169,768.5 H1178 M1169,771.5 H1178 M1171,764 V773 M1175.5,764 V773 M1189,765.5 H1198 M1189,768.5 H1198 M1189,771.5 H1198 M1191,764 V773 M1195.5,764 V773 M1200,765.5 H1209 M1200,768.5 H1209 M1200,771.5 H1209 M1202,764 V773 M1206.5,764 V773 M1220,765.5 H1229 M1220,768.5 H1229 M1220,771.5 H1229 M1222,764 V773 M1226.5,764 V773 M1231,765.5 H1240 M1231,768.5 H1240 M1231,771.5 H1240 M1233,764 V773 M1237.5,764 V773 M1251,765.5 H1260 M1251,768.5 H1260 M1251,771.5 H1260 M1253,764 V773 M1257.5,764 V773 M1262,765.5 H1271 M1262,768.5 H1271 M1262,771.5 H1271 M1264,764 V773 M1268.5,764 V773" stroke="#5c5c4e" stroke-width="1.3" fill="none" opacity="0.75"/>
<rect x="1182.5" y="767.5" width="2" height="2" fill="#5c5c4e"/>
<rect x="1213.5" y="767.5" width="2" height="2" fill="#5c5c4e"/>
<rect x="1244.5" y="767.5" width="2" height="2" fill="#5c5c4e"/>
<text x="1161" y="781.5" fill="#000000" font-size="13" font-style="italic" textLength="108" lengthAdjust="spacingAndGlyphs" opacity="0.8">www.hbaccexp.net</text>
<text transform="translate(1169.5,785.8) scale(1,1.05)" fill="#f2f2f2" font-size="12.4" text-anchor="start" xml:space="preserve" >2020-11-10 17:46</text>
</svg></body></html>
